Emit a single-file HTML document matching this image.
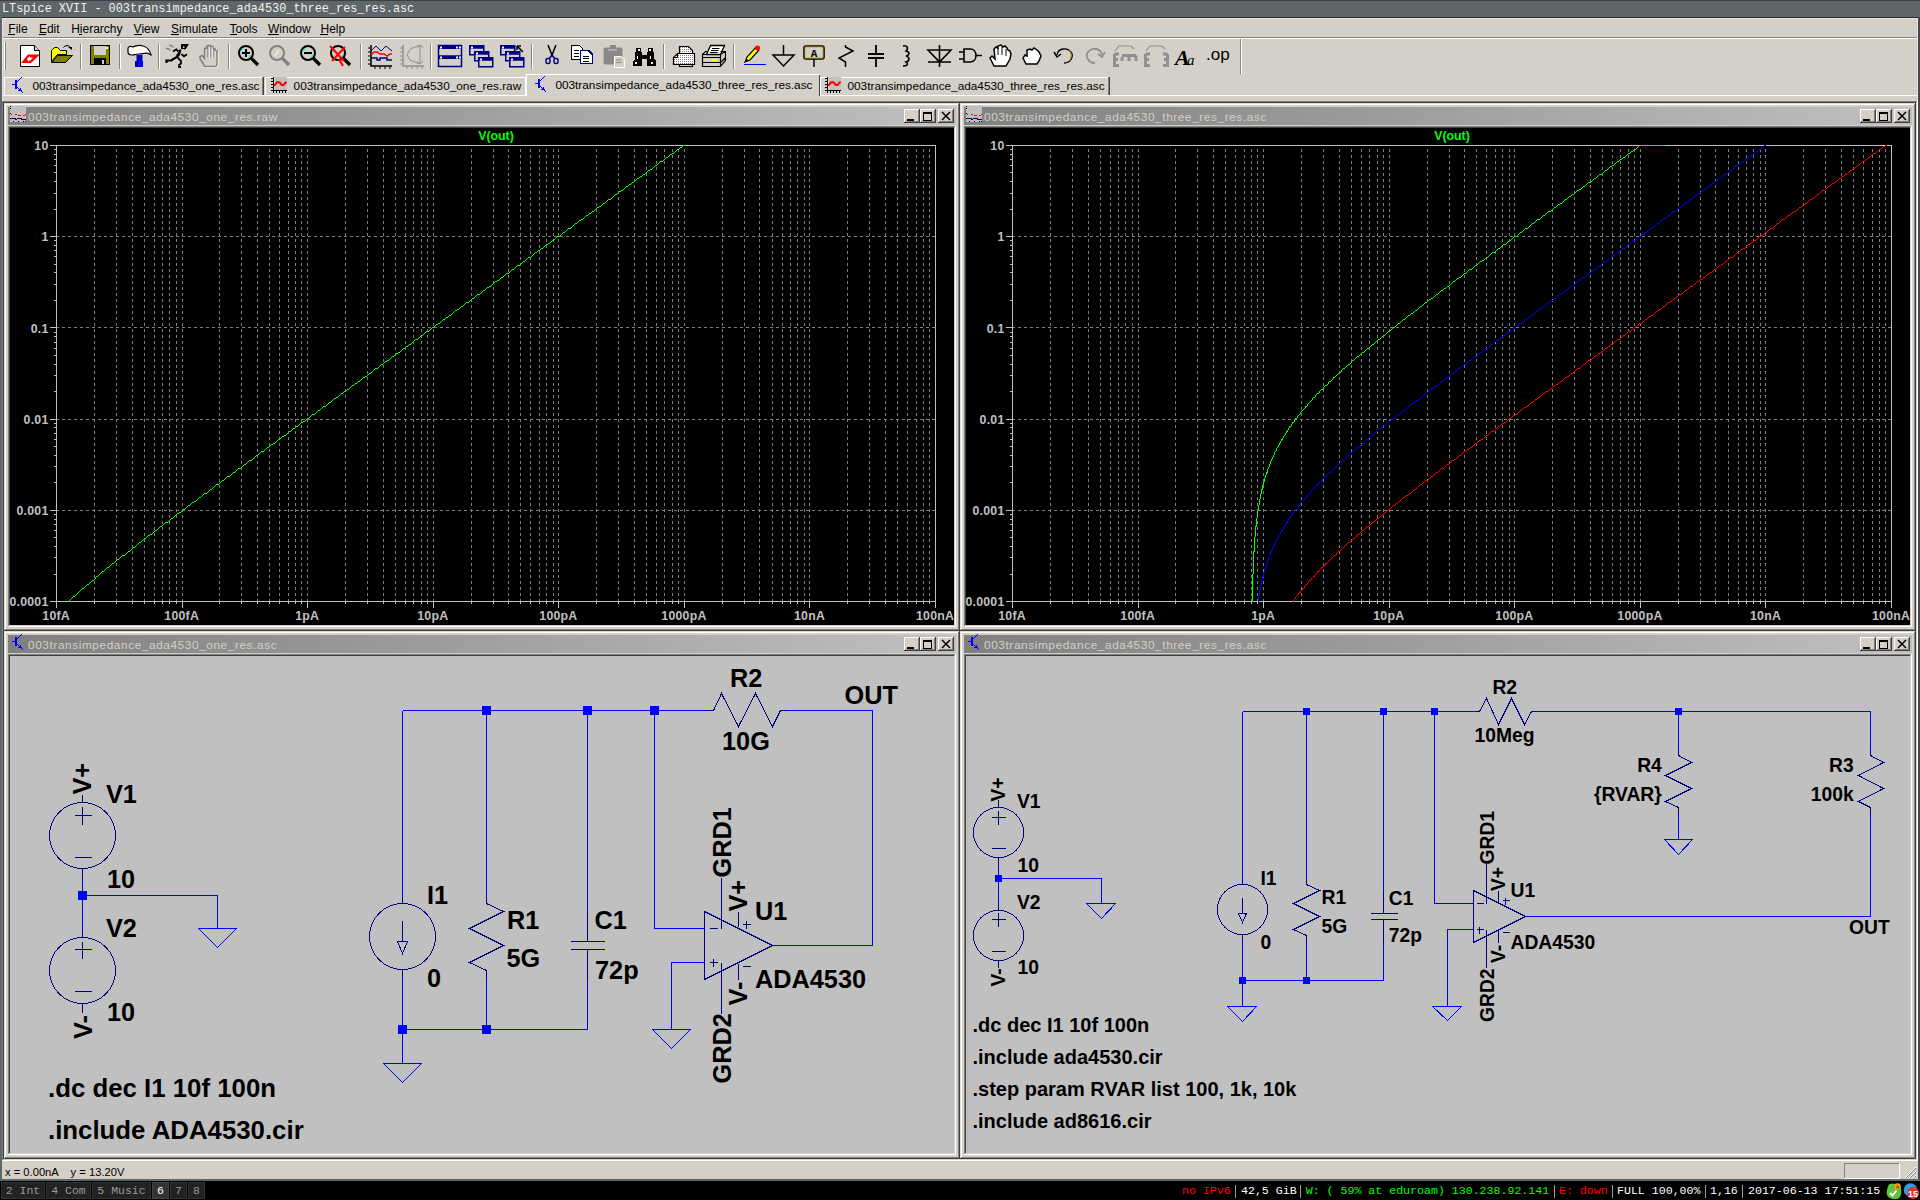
<!DOCTYPE html><html><head><meta charset="utf-8"><style>
html,body{margin:0;padding:0;width:1920px;height:1200px;overflow:hidden;background:#5f6669;}
body{position:relative;font-family:"Liberation Sans",sans-serif;}
div{box-sizing:border-box;}
svg{position:absolute;overflow:visible;}
</style></head><body>
<div style="position:absolute;left:0px;top:0px;width:1920px;height:1px;background:#3c4042;"></div>
<div style="position:absolute;left:2px;top:1.84px;font-family:'Liberation Mono';font-size:11.85px;font-weight:normal;line-height:15px;color:#f2f2f2;white-space:pre;">LTspice XVII - 003transimpedance_ada4530_three_res_res.asc</div>
<div style="position:absolute;left:2px;top:17px;width:1916px;height:1px;background:#2b2b2b;"></div>
<div style="position:absolute;left:1918px;top:17px;width:2px;height:1163px;background:#45494c;"></div>
<div style="position:absolute;left:2px;top:18px;width:1916px;height:1161px;background:#d4d0c8;"></div>
<div style="position:absolute;left:2px;top:18px;width:1px;height:83px;background:#e8e4de;"></div>
<div style="position:absolute;left:2px;top:18px;width:1915px;height:1px;background:#e8e4de;"></div>
<div style="position:absolute;left:1917px;top:18px;width:1px;height:83px;background:#e8e4de;"></div>
<div style="position:absolute;left:8.3px;top:20.54px;font-family:'Liberation Sans';font-size:12px;font-weight:normal;line-height:16px;color:#000;white-space:pre;">File</div>
<div style="position:absolute;left:38.9px;top:20.54px;font-family:'Liberation Sans';font-size:12px;font-weight:normal;line-height:16px;color:#000;white-space:pre;">Edit</div>
<div style="position:absolute;left:71.2px;top:20.54px;font-family:'Liberation Sans';font-size:12px;font-weight:normal;line-height:16px;color:#000;white-space:pre;">Hierarchy</div>
<div style="position:absolute;left:133.6px;top:20.54px;font-family:'Liberation Sans';font-size:12px;font-weight:normal;line-height:16px;color:#000;white-space:pre;">View</div>
<div style="position:absolute;left:171px;top:20.54px;font-family:'Liberation Sans';font-size:12px;font-weight:normal;line-height:16px;color:#000;white-space:pre;">Simulate</div>
<div style="position:absolute;left:229.5px;top:20.54px;font-family:'Liberation Sans';font-size:12px;font-weight:normal;line-height:16px;color:#000;white-space:pre;">Tools</div>
<div style="position:absolute;left:268px;top:20.54px;font-family:'Liberation Sans';font-size:12px;font-weight:normal;line-height:16px;color:#000;white-space:pre;">Window</div>
<div style="position:absolute;left:320.5px;top:20.54px;font-family:'Liberation Sans';font-size:12px;font-weight:normal;line-height:16px;color:#000;white-space:pre;">Help</div>
<div style="position:absolute;left:8px;top:34px;width:7px;height:1px;background:#000;"></div>
<div style="position:absolute;left:39px;top:34px;width:7px;height:1px;background:#000;"></div>
<div style="position:absolute;left:79px;top:34px;width:3px;height:1px;background:#000;"></div>
<div style="position:absolute;left:134px;top:34px;width:8px;height:1px;background:#000;"></div>
<div style="position:absolute;left:171px;top:34px;width:8px;height:1px;background:#000;"></div>
<div style="position:absolute;left:230px;top:34px;width:7px;height:1px;background:#000;"></div>
<div style="position:absolute;left:268px;top:34px;width:11px;height:1px;background:#000;"></div>
<div style="position:absolute;left:320px;top:34px;width:8px;height:1px;background:#000;"></div>
<div style="position:absolute;left:3px;top:37px;width:1914px;height:1px;background:#858585;"></div>
<div style="position:absolute;left:3px;top:38px;width:1914px;height:1px;background:#ffffff;"></div>
<div style="position:absolute;left:4px;top:42px;width:1px;height:28px;background:#ffffff;"></div>
<div style="position:absolute;left:5px;top:42px;width:1px;height:28px;background:#858585;"></div>
<div style="position:absolute;left:80px;top:44px;width:1px;height:25px;background:#858585;"></div>
<div style="position:absolute;left:81px;top:44px;width:1px;height:25px;background:#ffffff;"></div>
<div style="position:absolute;left:119px;top:44px;width:1px;height:25px;background:#858585;"></div>
<div style="position:absolute;left:120px;top:44px;width:1px;height:25px;background:#ffffff;"></div>
<div style="position:absolute;left:158px;top:44px;width:1px;height:25px;background:#858585;"></div>
<div style="position:absolute;left:159px;top:44px;width:1px;height:25px;background:#ffffff;"></div>
<div style="position:absolute;left:228px;top:44px;width:1px;height:25px;background:#858585;"></div>
<div style="position:absolute;left:229px;top:44px;width:1px;height:25px;background:#ffffff;"></div>
<div style="position:absolute;left:360px;top:44px;width:1px;height:25px;background:#858585;"></div>
<div style="position:absolute;left:361px;top:44px;width:1px;height:25px;background:#ffffff;"></div>
<div style="position:absolute;left:430px;top:44px;width:1px;height:25px;background:#858585;"></div>
<div style="position:absolute;left:431px;top:44px;width:1px;height:25px;background:#ffffff;"></div>
<div style="position:absolute;left:531px;top:44px;width:1px;height:25px;background:#858585;"></div>
<div style="position:absolute;left:532px;top:44px;width:1px;height:25px;background:#ffffff;"></div>
<div style="position:absolute;left:663px;top:44px;width:1px;height:25px;background:#858585;"></div>
<div style="position:absolute;left:664px;top:44px;width:1px;height:25px;background:#ffffff;"></div>
<div style="position:absolute;left:733px;top:44px;width:1px;height:25px;background:#858585;"></div>
<div style="position:absolute;left:734px;top:44px;width:1px;height:25px;background:#ffffff;"></div>
<div style="position:absolute;left:1240px;top:39px;width:1px;height:35px;background:#858585;"></div>
<div style="position:absolute;left:1241px;top:39px;width:1px;height:35px;background:#ffffff;"></div>
<div style="position:absolute;left:3px;top:95px;width:1914px;height:1px;background:#ffffff;"></div>
<div style="position:absolute;left:4px;top:77px;width:1px;height:18px;background:#ffffff;"></div>
<div style="position:absolute;left:4px;top:77px;width:260px;height:1px;background:#ffffff;"></div>
<div style="position:absolute;left:262px;top:77px;width:1px;height:18px;background:#808080;"></div>
<div style="position:absolute;left:263px;top:77px;width:1px;height:18px;background:#404040;"></div>
<div style="position:absolute;left:32.5px;top:79.11px;font-family:'Liberation Sans';font-size:11.8px;font-weight:normal;line-height:15px;color:#000;white-space:pre;">003transimpedance_ada4530_one_res.asc</div>
<div style="position:absolute;left:265px;top:77px;width:1px;height:18px;background:#ffffff;"></div>
<div style="position:absolute;left:265px;top:77px;width:261px;height:1px;background:#ffffff;"></div>
<div style="position:absolute;left:525px;top:77px;width:1px;height:18px;background:#ffffff;"></div>
<div style="position:absolute;left:293.6px;top:79.11px;font-family:'Liberation Sans';font-size:11.8px;font-weight:normal;line-height:15px;color:#000;white-space:pre;">003transimpedance_ada4530_one_res.raw</div>
<div style="position:absolute;left:526px;top:74px;width:294px;height:22px;background:#d4d0c8;"></div>
<div style="position:absolute;left:526px;top:74px;width:1px;height:22px;background:#ffffff;"></div>
<div style="position:absolute;left:526px;top:74px;width:294px;height:1px;background:#ffffff;"></div>
<div style="position:absolute;left:819px;top:75px;width:1px;height:21px;background:#404040;"></div>
<div style="position:absolute;left:555.4px;top:78.01px;font-family:'Liberation Sans';font-size:11.8px;font-weight:normal;line-height:15px;color:#000;white-space:pre;">003transimpedance_ada4530_three_res_res.asc</div>
<div style="position:absolute;left:820px;top:77px;width:1px;height:18px;background:#ffffff;"></div>
<div style="position:absolute;left:820px;top:77px;width:290px;height:1px;background:#ffffff;"></div>
<div style="position:absolute;left:1108px;top:77px;width:1px;height:18px;background:#808080;"></div>
<div style="position:absolute;left:1109px;top:77px;width:1px;height:18px;background:#404040;"></div>
<div style="position:absolute;left:847.5px;top:79.11px;font-family:'Liberation Sans';font-size:11.8px;font-weight:normal;line-height:15px;color:#000;white-space:pre;">003transimpedance_ada4530_three_res_res.asc</div>
<div style="position:absolute;left:2px;top:101px;width:1916px;height:1px;background:#808080;"></div>
<div style="position:absolute;left:2px;top:101px;width:1px;height:1060px;background:#808080;"></div>
<div style="position:absolute;left:3px;top:102px;width:1914px;height:1px;background:#404040;"></div>
<div style="position:absolute;left:3px;top:102px;width:1px;height:1058px;background:#404040;"></div>
<div style="position:absolute;left:2px;top:1160px;width:1916px;height:1px;background:#ffffff;"></div>
<div style="position:absolute;left:1917px;top:101px;width:1px;height:1060px;background:#ffffff;"></div>
<div style="position:absolute;left:3px;top:1159px;width:1914px;height:1px;background:#d4d0c8;"></div>
<div style="position:absolute;left:1916px;top:102px;width:1px;height:1058px;background:#d4d0c8;"></div>
<div style="position:absolute;left:5px;top:1164.52px;font-family:'Liberation Sans';font-size:11.2px;font-weight:normal;line-height:15px;color:#000;white-space:pre;">x = 0.00nA    y = 13.20V</div>
<div style="position:absolute;left:1844px;top:1163px;width:56px;height:1px;background:#808080;"></div>
<div style="position:absolute;left:1844px;top:1163px;width:1px;height:16px;background:#808080;"></div>
<div style="position:absolute;left:1844px;top:1178px;width:56px;height:1px;background:#ffffff;"></div>
<div style="position:absolute;left:1899px;top:1163px;width:1px;height:16px;background:#ffffff;"></div>
<svg style="left:0;top:0" width="1920" height="1200"><line x1="1913" y1="1178" x2="1916" y2="1175" stroke="#ffffff" stroke-width="1"/><line x1="1914" y1="1178" x2="1916" y2="1176" stroke="#808080" stroke-width="1"/></svg>
<svg style="left:0;top:0" width="1920" height="1200"><line x1="1909" y1="1178" x2="1916" y2="1171" stroke="#ffffff" stroke-width="1"/><line x1="1910" y1="1178" x2="1916" y2="1172" stroke="#808080" stroke-width="1"/></svg>
<svg style="left:0;top:0" width="1920" height="1200"><line x1="1905" y1="1178" x2="1916" y2="1167" stroke="#ffffff" stroke-width="1"/><line x1="1906" y1="1178" x2="1916" y2="1168" stroke="#808080" stroke-width="1"/></svg>
<div style="position:absolute;left:0px;top:1179px;width:1920px;height:2px;background:#5f6669;"></div>
<div style="position:absolute;left:0px;top:1181px;width:1920px;height:19px;background:#000000;"></div>
<div style="position:absolute;left:1px;top:1182px;width:44px;height:17px;background:#222222;border:1px solid #333333"></div>
<div style="position:absolute;left:-277.0px;width:600px;text-align:center;top:1182.84px;font-family:'Liberation Mono';font-size:11.5px;font-weight:normal;line-height:15px;color:#999999;white-space:pre;">2 Int</div>
<div style="position:absolute;left:46px;top:1182px;width:45px;height:17px;background:#222222;border:1px solid #333333"></div>
<div style="position:absolute;left:-231.5px;width:600px;text-align:center;top:1182.84px;font-family:'Liberation Mono';font-size:11.5px;font-weight:normal;line-height:15px;color:#999999;white-space:pre;">4 Com</div>
<div style="position:absolute;left:92px;top:1182px;width:59px;height:17px;background:#222222;border:1px solid #333333"></div>
<div style="position:absolute;left:-178.5px;width:600px;text-align:center;top:1182.84px;font-family:'Liberation Mono';font-size:11.5px;font-weight:normal;line-height:15px;color:#999999;white-space:pre;">5 Music</div>
<div style="position:absolute;left:152px;top:1182px;width:17px;height:17px;background:#333333;border:1px solid #444444"></div>
<div style="position:absolute;left:-139.5px;width:600px;text-align:center;top:1182.84px;font-family:'Liberation Mono';font-size:11.5px;font-weight:normal;line-height:15px;color:#ffffff;white-space:pre;">6</div>
<div style="position:absolute;left:170px;top:1182px;width:17px;height:17px;background:#222222;border:1px solid #333333"></div>
<div style="position:absolute;left:-121.5px;width:600px;text-align:center;top:1182.84px;font-family:'Liberation Mono';font-size:11.5px;font-weight:normal;line-height:15px;color:#999999;white-space:pre;">7</div>
<div style="position:absolute;left:188px;top:1182px;width:17px;height:17px;background:#222222;border:1px solid #333333"></div>
<div style="position:absolute;left:-103.5px;width:600px;text-align:center;top:1182.84px;font-family:'Liberation Mono';font-size:11.5px;font-weight:normal;line-height:15px;color:#999999;white-space:pre;">8</div>
<div style="position:absolute;left:1182px;top:1183.01px;font-family:'Liberation Mono';font-size:11.6px;font-weight:normal;line-height:15px;color:#ff0000;white-space:pre;">no IPv6</div>
<div style="position:absolute;left:1241px;top:1183.01px;font-family:'Liberation Mono';font-size:11.6px;font-weight:normal;line-height:15px;color:#ffffff;white-space:pre;">42,5 GiB</div>
<div style="position:absolute;left:1305.7px;top:1183.01px;font-family:'Liberation Mono';font-size:11.6px;font-weight:normal;line-height:15px;color:#00ff00;white-space:pre;">W: ( 59% at eduroam) 130.238.92.141</div>
<div style="position:absolute;left:1559px;top:1183.01px;font-family:'Liberation Mono';font-size:11.6px;font-weight:normal;line-height:15px;color:#ff0000;white-space:pre;">E: down</div>
<div style="position:absolute;left:1617px;top:1183.01px;font-family:'Liberation Mono';font-size:11.6px;font-weight:normal;line-height:15px;color:#ffffff;white-space:pre;">FULL 100,00%</div>
<div style="position:absolute;left:1710px;top:1183.01px;font-family:'Liberation Mono';font-size:11.6px;font-weight:normal;line-height:15px;color:#ffffff;white-space:pre;">1,16</div>
<div style="position:absolute;left:1748px;top:1183.01px;font-family:'Liberation Mono';font-size:11.6px;font-weight:normal;line-height:15px;color:#ffffff;white-space:pre;">2017-06-13 17:51:15</div>
<div style="position:absolute;left:1235px;top:1185px;width:1px;height:13px;background:#999999;"></div>
<div style="position:absolute;left:1300px;top:1185px;width:1px;height:13px;background:#999999;"></div>
<div style="position:absolute;left:1554px;top:1185px;width:1px;height:13px;background:#999999;"></div>
<div style="position:absolute;left:1612px;top:1185px;width:1px;height:13px;background:#999999;"></div>
<div style="position:absolute;left:1705px;top:1185px;width:1px;height:13px;background:#999999;"></div>
<div style="position:absolute;left:1742px;top:1185px;width:1px;height:13px;background:#999999;"></div>
<svg style="left:1886px;top:1183px" width="34" height="17"><path d="M2 3C3 0 7 0 9 1C12 0 15 2 15 6C16 9 15 13 13 15C10 17 6 16 4 15C1 14 0 10 1 7Z" fill="#5cc43c"/><path d="M4 10L6.5 12.5L10.5 7.5" stroke="#fff" stroke-width="2" fill="none"/><circle cx="11.5" cy="3.5" r="3.3" fill="#f5a000"/><text x="11.5" y="6" font-family="Liberation Sans" font-size="6" fill="#333" text-anchor="middle">4</text><circle cx="24.5" cy="7" r="6.8" fill="#2aa0e0"/><circle cx="27" cy="10" r="6" fill="#e53030"/><text x="27" y="13.5" font-family="Liberation Sans" font-size="9" font-weight="bold" fill="#fff" text-anchor="middle">15</text></svg>
<div style="position:absolute;left:4px;top:103px;width:956px;height:528px;background:#d4d0c8;"></div>
<div style="position:absolute;left:4px;top:103px;width:955px;height:1px;background:#e0dcd4;"></div>
<div style="position:absolute;left:4px;top:103px;width:1px;height:527px;background:#e0dcd4;"></div>
<div style="position:absolute;left:5px;top:104px;width:953px;height:1px;background:#ffffff;"></div>
<div style="position:absolute;left:5px;top:104px;width:1px;height:525px;background:#ffffff;"></div>
<div style="position:absolute;left:958px;top:104px;width:1px;height:526px;background:#808080;"></div>
<div style="position:absolute;left:5px;top:629px;width:954px;height:1px;background:#808080;"></div>
<div style="position:absolute;left:959px;top:103px;width:1px;height:528px;background:#404040;"></div>
<div style="position:absolute;left:4px;top:630px;width:956px;height:1px;background:#404040;"></div>
<div style="position:absolute;left:8px;top:107px;width:948px;height:18px;background:;background:linear-gradient(to right,#808080,#c0c0c0)"></div>
<svg style="left:10px;top:106px" width="16" height="16" shape-rendering="crispEdges"><rect x="0" y="0" width="16" height="16" fill="#c0c0c0"/><rect x="0" y="0" width="1" height="1" fill="#000"/><rect x="0" y="2" width="1" height="1" fill="#000"/><rect x="0" y="7" width="1" height="1" fill="#000"/><rect x="0" y="12" width="1" height="1" fill="#000"/><rect x="3" y="15" width="1" height="1" fill="#000"/><rect x="8" y="15" width="1" height="1" fill="#000"/><rect x="13" y="15" width="1" height="1" fill="#000"/><rect x="15" y="15" width="1" height="1" fill="#000"/><rect x="1" y="8" width="1" height="1" fill="#ff0000"/><rect x="5" y="8" width="2" height="1" fill="#ff0000"/><rect x="8" y="9" width="3" height="1" fill="#ff0000"/><rect x="13" y="9" width="2" height="1" fill="#ff0000"/><rect x="15" y="8" width="1" height="1" fill="#ff0000"/><rect x="1" y="12" width="5" height="1" fill="#000080"/><rect x="5" y="13" width="2" height="1" fill="#000080"/><rect x="7" y="12" width="5" height="1" fill="#000080"/><rect x="11" y="13" width="5" height="1" fill="#000080"/></svg>
<div style="position:absolute;left:28px;top:110.41px;font-family:'Liberation Sans';font-size:11.8px;font-weight:normal;line-height:15px;color:#d4d0c8;white-space:pre;letter-spacing:0.6px">003transimpedance_ada4530_one_res.raw</div>
<div style="position:absolute;left:938px;top:109px;width:16px;height:14px;background:#d4d0c8;"></div>
<div style="position:absolute;left:938px;top:109px;width:15px;height:1px;background:#ffffff;"></div>
<div style="position:absolute;left:938px;top:109px;width:1px;height:13px;background:#ffffff;"></div>
<div style="position:absolute;left:939px;top:121px;width:14px;height:1px;background:#808080;"></div>
<div style="position:absolute;left:952px;top:110px;width:1px;height:12px;background:#808080;"></div>
<div style="position:absolute;left:938px;top:122px;width:16px;height:1px;background:#404040;"></div>
<div style="position:absolute;left:953px;top:109px;width:1px;height:14px;background:#404040;"></div>
<svg style="left:938px;top:109px" width="16" height="14"><path d="M4 3 L12 11 M12 3 L4 11" stroke="#000" stroke-width="1.5"/></svg>
<div style="position:absolute;left:920px;top:109px;width:16px;height:14px;background:#d4d0c8;"></div>
<div style="position:absolute;left:920px;top:109px;width:15px;height:1px;background:#ffffff;"></div>
<div style="position:absolute;left:920px;top:109px;width:1px;height:13px;background:#ffffff;"></div>
<div style="position:absolute;left:921px;top:121px;width:14px;height:1px;background:#808080;"></div>
<div style="position:absolute;left:934px;top:110px;width:1px;height:12px;background:#808080;"></div>
<div style="position:absolute;left:920px;top:122px;width:16px;height:1px;background:#404040;"></div>
<div style="position:absolute;left:935px;top:109px;width:1px;height:14px;background:#404040;"></div>
<div style="position:absolute;left:923px;top:112px;width:9px;height:9px;background:transparent;border:1px solid #000;border-top-width:2px"></div>
<div style="position:absolute;left:904px;top:109px;width:16px;height:14px;background:#d4d0c8;"></div>
<div style="position:absolute;left:904px;top:109px;width:15px;height:1px;background:#ffffff;"></div>
<div style="position:absolute;left:904px;top:109px;width:1px;height:13px;background:#ffffff;"></div>
<div style="position:absolute;left:905px;top:121px;width:14px;height:1px;background:#808080;"></div>
<div style="position:absolute;left:918px;top:110px;width:1px;height:12px;background:#808080;"></div>
<div style="position:absolute;left:904px;top:122px;width:16px;height:1px;background:#404040;"></div>
<div style="position:absolute;left:919px;top:109px;width:1px;height:14px;background:#404040;"></div>
<div style="position:absolute;left:907px;top:119px;width:7px;height:2px;background:#000;"></div>
<div style="position:absolute;left:8px;top:126px;width:948px;height:1px;background:#808080;"></div>
<div style="position:absolute;left:8px;top:126px;width:1px;height:500px;background:#808080;"></div>
<div style="position:absolute;left:9px;top:127px;width:946px;height:1px;background:#404040;"></div>
<div style="position:absolute;left:9px;top:127px;width:1px;height:498px;background:#404040;"></div>
<div style="position:absolute;left:8px;top:626px;width:948px;height:1px;background:#ffffff;"></div>
<div style="position:absolute;left:955px;top:126px;width:1px;height:501px;background:#ffffff;"></div>
<div style="position:absolute;left:9px;top:625px;width:946px;height:1px;background:#d4d0c8;"></div>
<div style="position:absolute;left:954px;top:127px;width:1px;height:499px;background:#d4d0c8;"></div>
<div style="position:absolute;left:960px;top:103px;width:956px;height:528px;background:#d4d0c8;"></div>
<div style="position:absolute;left:960px;top:103px;width:955px;height:1px;background:#e0dcd4;"></div>
<div style="position:absolute;left:960px;top:103px;width:1px;height:527px;background:#e0dcd4;"></div>
<div style="position:absolute;left:961px;top:104px;width:953px;height:1px;background:#ffffff;"></div>
<div style="position:absolute;left:961px;top:104px;width:1px;height:525px;background:#ffffff;"></div>
<div style="position:absolute;left:1914px;top:104px;width:1px;height:526px;background:#808080;"></div>
<div style="position:absolute;left:961px;top:629px;width:954px;height:1px;background:#808080;"></div>
<div style="position:absolute;left:1915px;top:103px;width:1px;height:528px;background:#404040;"></div>
<div style="position:absolute;left:960px;top:630px;width:956px;height:1px;background:#404040;"></div>
<div style="position:absolute;left:964px;top:107px;width:948px;height:18px;background:;background:linear-gradient(to right,#808080,#c0c0c0)"></div>
<svg style="left:966px;top:106px" width="16" height="16" shape-rendering="crispEdges"><rect x="0" y="0" width="16" height="16" fill="#c0c0c0"/><rect x="0" y="0" width="1" height="1" fill="#000"/><rect x="0" y="2" width="1" height="1" fill="#000"/><rect x="0" y="7" width="1" height="1" fill="#000"/><rect x="0" y="12" width="1" height="1" fill="#000"/><rect x="3" y="15" width="1" height="1" fill="#000"/><rect x="8" y="15" width="1" height="1" fill="#000"/><rect x="13" y="15" width="1" height="1" fill="#000"/><rect x="15" y="15" width="1" height="1" fill="#000"/><rect x="1" y="8" width="1" height="1" fill="#ff0000"/><rect x="5" y="8" width="2" height="1" fill="#ff0000"/><rect x="8" y="9" width="3" height="1" fill="#ff0000"/><rect x="13" y="9" width="2" height="1" fill="#ff0000"/><rect x="15" y="8" width="1" height="1" fill="#ff0000"/><rect x="1" y="12" width="5" height="1" fill="#000080"/><rect x="5" y="13" width="2" height="1" fill="#000080"/><rect x="7" y="12" width="5" height="1" fill="#000080"/><rect x="11" y="13" width="5" height="1" fill="#000080"/></svg>
<div style="position:absolute;left:984px;top:110.41px;font-family:'Liberation Sans';font-size:11.8px;font-weight:normal;line-height:15px;color:#d4d0c8;white-space:pre;letter-spacing:0.6px">003transimpedance_ada4530_three_res_res.asc</div>
<div style="position:absolute;left:1894px;top:109px;width:16px;height:14px;background:#d4d0c8;"></div>
<div style="position:absolute;left:1894px;top:109px;width:15px;height:1px;background:#ffffff;"></div>
<div style="position:absolute;left:1894px;top:109px;width:1px;height:13px;background:#ffffff;"></div>
<div style="position:absolute;left:1895px;top:121px;width:14px;height:1px;background:#808080;"></div>
<div style="position:absolute;left:1908px;top:110px;width:1px;height:12px;background:#808080;"></div>
<div style="position:absolute;left:1894px;top:122px;width:16px;height:1px;background:#404040;"></div>
<div style="position:absolute;left:1909px;top:109px;width:1px;height:14px;background:#404040;"></div>
<svg style="left:1894px;top:109px" width="16" height="14"><path d="M4 3 L12 11 M12 3 L4 11" stroke="#000" stroke-width="1.5"/></svg>
<div style="position:absolute;left:1876px;top:109px;width:16px;height:14px;background:#d4d0c8;"></div>
<div style="position:absolute;left:1876px;top:109px;width:15px;height:1px;background:#ffffff;"></div>
<div style="position:absolute;left:1876px;top:109px;width:1px;height:13px;background:#ffffff;"></div>
<div style="position:absolute;left:1877px;top:121px;width:14px;height:1px;background:#808080;"></div>
<div style="position:absolute;left:1890px;top:110px;width:1px;height:12px;background:#808080;"></div>
<div style="position:absolute;left:1876px;top:122px;width:16px;height:1px;background:#404040;"></div>
<div style="position:absolute;left:1891px;top:109px;width:1px;height:14px;background:#404040;"></div>
<div style="position:absolute;left:1879px;top:112px;width:9px;height:9px;background:transparent;border:1px solid #000;border-top-width:2px"></div>
<div style="position:absolute;left:1860px;top:109px;width:16px;height:14px;background:#d4d0c8;"></div>
<div style="position:absolute;left:1860px;top:109px;width:15px;height:1px;background:#ffffff;"></div>
<div style="position:absolute;left:1860px;top:109px;width:1px;height:13px;background:#ffffff;"></div>
<div style="position:absolute;left:1861px;top:121px;width:14px;height:1px;background:#808080;"></div>
<div style="position:absolute;left:1874px;top:110px;width:1px;height:12px;background:#808080;"></div>
<div style="position:absolute;left:1860px;top:122px;width:16px;height:1px;background:#404040;"></div>
<div style="position:absolute;left:1875px;top:109px;width:1px;height:14px;background:#404040;"></div>
<div style="position:absolute;left:1863px;top:119px;width:7px;height:2px;background:#000;"></div>
<div style="position:absolute;left:964px;top:126px;width:948px;height:1px;background:#808080;"></div>
<div style="position:absolute;left:964px;top:126px;width:1px;height:500px;background:#808080;"></div>
<div style="position:absolute;left:965px;top:127px;width:946px;height:1px;background:#404040;"></div>
<div style="position:absolute;left:965px;top:127px;width:1px;height:498px;background:#404040;"></div>
<div style="position:absolute;left:964px;top:626px;width:948px;height:1px;background:#ffffff;"></div>
<div style="position:absolute;left:1911px;top:126px;width:1px;height:501px;background:#ffffff;"></div>
<div style="position:absolute;left:965px;top:625px;width:946px;height:1px;background:#d4d0c8;"></div>
<div style="position:absolute;left:1910px;top:127px;width:1px;height:499px;background:#d4d0c8;"></div>
<div style="position:absolute;left:4px;top:631px;width:956px;height:528px;background:#d4d0c8;"></div>
<div style="position:absolute;left:4px;top:631px;width:955px;height:1px;background:#e0dcd4;"></div>
<div style="position:absolute;left:4px;top:631px;width:1px;height:527px;background:#e0dcd4;"></div>
<div style="position:absolute;left:5px;top:632px;width:953px;height:1px;background:#ffffff;"></div>
<div style="position:absolute;left:5px;top:632px;width:1px;height:525px;background:#ffffff;"></div>
<div style="position:absolute;left:958px;top:632px;width:1px;height:526px;background:#808080;"></div>
<div style="position:absolute;left:5px;top:1157px;width:954px;height:1px;background:#808080;"></div>
<div style="position:absolute;left:959px;top:631px;width:1px;height:528px;background:#404040;"></div>
<div style="position:absolute;left:4px;top:1158px;width:956px;height:1px;background:#404040;"></div>
<div style="position:absolute;left:8px;top:635px;width:948px;height:18px;background:;background:linear-gradient(to right,#808080,#c0c0c0)"></div>
<svg style="left:8px;top:634px" width="16" height="16" shape-rendering="crispEdges"><rect x="4" y="7" width="3" height="1" fill="#0000ff"/><rect x="7" y="3" width="2" height="9" fill="#0000ff"/><rect x="9" y="4" width="1" height="1" fill="#0000ff"/><rect x="10" y="3" width="1" height="1" fill="#0000ff"/><rect x="11" y="2" width="1" height="1" fill="#0000ff"/><rect x="12" y="1" width="1" height="1" fill="#0000ff"/><rect x="13" y="0" width="1" height="1" fill="#0000ff"/><rect x="9" y="10" width="1" height="1" fill="#0000ff"/><rect x="10" y="11" width="1" height="1" fill="#0000ff"/><rect x="12" y="11" width="1" height="3" fill="#0000ff"/><rect x="11" y="12" width="2" height="2" fill="#0000ff"/><rect x="10" y="13" width="3" height="1" fill="#0000ff"/><rect x="13" y="13" width="1" height="2" fill="#0000ff"/><rect x="14" y="15" width="1" height="1" fill="#0000ff"/></svg>
<div style="position:absolute;left:28px;top:638.41px;font-family:'Liberation Sans';font-size:11.8px;font-weight:normal;line-height:15px;color:#d4d0c8;white-space:pre;letter-spacing:0.6px">003transimpedance_ada4530_one_res.asc</div>
<div style="position:absolute;left:938px;top:637px;width:16px;height:14px;background:#d4d0c8;"></div>
<div style="position:absolute;left:938px;top:637px;width:15px;height:1px;background:#ffffff;"></div>
<div style="position:absolute;left:938px;top:637px;width:1px;height:13px;background:#ffffff;"></div>
<div style="position:absolute;left:939px;top:649px;width:14px;height:1px;background:#808080;"></div>
<div style="position:absolute;left:952px;top:638px;width:1px;height:12px;background:#808080;"></div>
<div style="position:absolute;left:938px;top:650px;width:16px;height:1px;background:#404040;"></div>
<div style="position:absolute;left:953px;top:637px;width:1px;height:14px;background:#404040;"></div>
<svg style="left:938px;top:637px" width="16" height="14"><path d="M4 3 L12 11 M12 3 L4 11" stroke="#000" stroke-width="1.5"/></svg>
<div style="position:absolute;left:920px;top:637px;width:16px;height:14px;background:#d4d0c8;"></div>
<div style="position:absolute;left:920px;top:637px;width:15px;height:1px;background:#ffffff;"></div>
<div style="position:absolute;left:920px;top:637px;width:1px;height:13px;background:#ffffff;"></div>
<div style="position:absolute;left:921px;top:649px;width:14px;height:1px;background:#808080;"></div>
<div style="position:absolute;left:934px;top:638px;width:1px;height:12px;background:#808080;"></div>
<div style="position:absolute;left:920px;top:650px;width:16px;height:1px;background:#404040;"></div>
<div style="position:absolute;left:935px;top:637px;width:1px;height:14px;background:#404040;"></div>
<div style="position:absolute;left:923px;top:640px;width:9px;height:9px;background:transparent;border:1px solid #000;border-top-width:2px"></div>
<div style="position:absolute;left:904px;top:637px;width:16px;height:14px;background:#d4d0c8;"></div>
<div style="position:absolute;left:904px;top:637px;width:15px;height:1px;background:#ffffff;"></div>
<div style="position:absolute;left:904px;top:637px;width:1px;height:13px;background:#ffffff;"></div>
<div style="position:absolute;left:905px;top:649px;width:14px;height:1px;background:#808080;"></div>
<div style="position:absolute;left:918px;top:638px;width:1px;height:12px;background:#808080;"></div>
<div style="position:absolute;left:904px;top:650px;width:16px;height:1px;background:#404040;"></div>
<div style="position:absolute;left:919px;top:637px;width:1px;height:14px;background:#404040;"></div>
<div style="position:absolute;left:907px;top:647px;width:7px;height:2px;background:#000;"></div>
<div style="position:absolute;left:8px;top:654px;width:948px;height:1px;background:#808080;"></div>
<div style="position:absolute;left:8px;top:654px;width:1px;height:500px;background:#808080;"></div>
<div style="position:absolute;left:9px;top:655px;width:946px;height:1px;background:#404040;"></div>
<div style="position:absolute;left:9px;top:655px;width:1px;height:498px;background:#404040;"></div>
<div style="position:absolute;left:8px;top:1154px;width:948px;height:1px;background:#ffffff;"></div>
<div style="position:absolute;left:955px;top:654px;width:1px;height:501px;background:#ffffff;"></div>
<div style="position:absolute;left:9px;top:1153px;width:946px;height:1px;background:#d4d0c8;"></div>
<div style="position:absolute;left:954px;top:655px;width:1px;height:499px;background:#d4d0c8;"></div>
<div style="position:absolute;left:960px;top:631px;width:956px;height:528px;background:#d4d0c8;"></div>
<div style="position:absolute;left:960px;top:631px;width:955px;height:1px;background:#e0dcd4;"></div>
<div style="position:absolute;left:960px;top:631px;width:1px;height:527px;background:#e0dcd4;"></div>
<div style="position:absolute;left:961px;top:632px;width:953px;height:1px;background:#ffffff;"></div>
<div style="position:absolute;left:961px;top:632px;width:1px;height:525px;background:#ffffff;"></div>
<div style="position:absolute;left:1914px;top:632px;width:1px;height:526px;background:#808080;"></div>
<div style="position:absolute;left:961px;top:1157px;width:954px;height:1px;background:#808080;"></div>
<div style="position:absolute;left:1915px;top:631px;width:1px;height:528px;background:#404040;"></div>
<div style="position:absolute;left:960px;top:1158px;width:956px;height:1px;background:#404040;"></div>
<div style="position:absolute;left:964px;top:635px;width:948px;height:18px;background:;background:linear-gradient(to right,#808080,#c0c0c0)"></div>
<svg style="left:964px;top:634px" width="16" height="16" shape-rendering="crispEdges"><rect x="4" y="7" width="3" height="1" fill="#0000ff"/><rect x="7" y="3" width="2" height="9" fill="#0000ff"/><rect x="9" y="4" width="1" height="1" fill="#0000ff"/><rect x="10" y="3" width="1" height="1" fill="#0000ff"/><rect x="11" y="2" width="1" height="1" fill="#0000ff"/><rect x="12" y="1" width="1" height="1" fill="#0000ff"/><rect x="13" y="0" width="1" height="1" fill="#0000ff"/><rect x="9" y="10" width="1" height="1" fill="#0000ff"/><rect x="10" y="11" width="1" height="1" fill="#0000ff"/><rect x="12" y="11" width="1" height="3" fill="#0000ff"/><rect x="11" y="12" width="2" height="2" fill="#0000ff"/><rect x="10" y="13" width="3" height="1" fill="#0000ff"/><rect x="13" y="13" width="1" height="2" fill="#0000ff"/><rect x="14" y="15" width="1" height="1" fill="#0000ff"/></svg>
<div style="position:absolute;left:984px;top:638.41px;font-family:'Liberation Sans';font-size:11.8px;font-weight:normal;line-height:15px;color:#d4d0c8;white-space:pre;letter-spacing:0.6px">003transimpedance_ada4530_three_res_res.asc</div>
<div style="position:absolute;left:1894px;top:637px;width:16px;height:14px;background:#d4d0c8;"></div>
<div style="position:absolute;left:1894px;top:637px;width:15px;height:1px;background:#ffffff;"></div>
<div style="position:absolute;left:1894px;top:637px;width:1px;height:13px;background:#ffffff;"></div>
<div style="position:absolute;left:1895px;top:649px;width:14px;height:1px;background:#808080;"></div>
<div style="position:absolute;left:1908px;top:638px;width:1px;height:12px;background:#808080;"></div>
<div style="position:absolute;left:1894px;top:650px;width:16px;height:1px;background:#404040;"></div>
<div style="position:absolute;left:1909px;top:637px;width:1px;height:14px;background:#404040;"></div>
<svg style="left:1894px;top:637px" width="16" height="14"><path d="M4 3 L12 11 M12 3 L4 11" stroke="#000" stroke-width="1.5"/></svg>
<div style="position:absolute;left:1876px;top:637px;width:16px;height:14px;background:#d4d0c8;"></div>
<div style="position:absolute;left:1876px;top:637px;width:15px;height:1px;background:#ffffff;"></div>
<div style="position:absolute;left:1876px;top:637px;width:1px;height:13px;background:#ffffff;"></div>
<div style="position:absolute;left:1877px;top:649px;width:14px;height:1px;background:#808080;"></div>
<div style="position:absolute;left:1890px;top:638px;width:1px;height:12px;background:#808080;"></div>
<div style="position:absolute;left:1876px;top:650px;width:16px;height:1px;background:#404040;"></div>
<div style="position:absolute;left:1891px;top:637px;width:1px;height:14px;background:#404040;"></div>
<div style="position:absolute;left:1879px;top:640px;width:9px;height:9px;background:transparent;border:1px solid #000;border-top-width:2px"></div>
<div style="position:absolute;left:1860px;top:637px;width:16px;height:14px;background:#d4d0c8;"></div>
<div style="position:absolute;left:1860px;top:637px;width:15px;height:1px;background:#ffffff;"></div>
<div style="position:absolute;left:1860px;top:637px;width:1px;height:13px;background:#ffffff;"></div>
<div style="position:absolute;left:1861px;top:649px;width:14px;height:1px;background:#808080;"></div>
<div style="position:absolute;left:1874px;top:638px;width:1px;height:12px;background:#808080;"></div>
<div style="position:absolute;left:1860px;top:650px;width:16px;height:1px;background:#404040;"></div>
<div style="position:absolute;left:1875px;top:637px;width:1px;height:14px;background:#404040;"></div>
<div style="position:absolute;left:1863px;top:647px;width:7px;height:2px;background:#000;"></div>
<div style="position:absolute;left:964px;top:654px;width:948px;height:1px;background:#808080;"></div>
<div style="position:absolute;left:964px;top:654px;width:1px;height:500px;background:#808080;"></div>
<div style="position:absolute;left:965px;top:655px;width:946px;height:1px;background:#404040;"></div>
<div style="position:absolute;left:965px;top:655px;width:1px;height:498px;background:#404040;"></div>
<div style="position:absolute;left:964px;top:1154px;width:948px;height:1px;background:#ffffff;"></div>
<div style="position:absolute;left:1911px;top:654px;width:1px;height:501px;background:#ffffff;"></div>
<div style="position:absolute;left:965px;top:1153px;width:946px;height:1px;background:#d4d0c8;"></div>
<div style="position:absolute;left:1910px;top:655px;width:1px;height:499px;background:#d4d0c8;"></div>
<div style="position:absolute;left:10px;top:128px;width:944px;height:497px;background:#000000;"></div>
<svg style="left:0;top:0" width="1920" height="1200" shape-rendering="crispEdges"><line x1="94.5" y1="602" x2="94.5" y2="145" stroke="#808080" stroke-dasharray="3 3"/><rect x="94" y="602" width="1" height="2" fill="#c0c0c0"/><line x1="116.5" y1="602" x2="116.5" y2="145" stroke="#808080" stroke-dasharray="3 3"/><rect x="116" y="602" width="1" height="2" fill="#c0c0c0"/><line x1="132.5" y1="602" x2="132.5" y2="145" stroke="#808080" stroke-dasharray="3 3"/><rect x="132" y="602" width="1" height="2" fill="#c0c0c0"/><line x1="144.5" y1="602" x2="144.5" y2="145" stroke="#808080" stroke-dasharray="3 3"/><rect x="144" y="602" width="1" height="2" fill="#c0c0c0"/><line x1="154.5" y1="602" x2="154.5" y2="145" stroke="#808080" stroke-dasharray="3 3"/><rect x="154" y="602" width="1" height="2" fill="#c0c0c0"/><line x1="162.5" y1="602" x2="162.5" y2="145" stroke="#808080" stroke-dasharray="3 3"/><rect x="162" y="602" width="1" height="2" fill="#c0c0c0"/><line x1="169.5" y1="602" x2="169.5" y2="145" stroke="#808080" stroke-dasharray="3 3"/><rect x="169" y="602" width="1" height="2" fill="#c0c0c0"/><line x1="176.5" y1="602" x2="176.5" y2="145" stroke="#808080" stroke-dasharray="3 3"/><rect x="176" y="602" width="1" height="2" fill="#c0c0c0"/><line x1="182.5" y1="602" x2="182.5" y2="145" stroke="#808080" stroke-dasharray="3 3"/><rect x="182" y="602" width="1" height="6" fill="#c0c0c0"/><line x1="219.5" y1="602" x2="219.5" y2="145" stroke="#808080" stroke-dasharray="3 3"/><rect x="219" y="602" width="1" height="2" fill="#c0c0c0"/><line x1="241.5" y1="602" x2="241.5" y2="145" stroke="#808080" stroke-dasharray="3 3"/><rect x="241" y="602" width="1" height="2" fill="#c0c0c0"/><line x1="257.5" y1="602" x2="257.5" y2="145" stroke="#808080" stroke-dasharray="3 3"/><rect x="257" y="602" width="1" height="2" fill="#c0c0c0"/><line x1="269.5" y1="602" x2="269.5" y2="145" stroke="#808080" stroke-dasharray="3 3"/><rect x="269" y="602" width="1" height="2" fill="#c0c0c0"/><line x1="279.5" y1="602" x2="279.5" y2="145" stroke="#808080" stroke-dasharray="3 3"/><rect x="279" y="602" width="1" height="2" fill="#c0c0c0"/><line x1="288.5" y1="602" x2="288.5" y2="145" stroke="#808080" stroke-dasharray="3 3"/><rect x="288" y="602" width="1" height="2" fill="#c0c0c0"/><line x1="295.5" y1="602" x2="295.5" y2="145" stroke="#808080" stroke-dasharray="3 3"/><rect x="295" y="602" width="1" height="2" fill="#c0c0c0"/><line x1="301.5" y1="602" x2="301.5" y2="145" stroke="#808080" stroke-dasharray="3 3"/><rect x="301" y="602" width="1" height="2" fill="#c0c0c0"/><line x1="307.5" y1="602" x2="307.5" y2="145" stroke="#808080" stroke-dasharray="3 3"/><rect x="307" y="602" width="1" height="6" fill="#c0c0c0"/><line x1="345.5" y1="602" x2="345.5" y2="145" stroke="#808080" stroke-dasharray="3 3"/><rect x="345" y="602" width="1" height="2" fill="#c0c0c0"/><line x1="367.5" y1="602" x2="367.5" y2="145" stroke="#808080" stroke-dasharray="3 3"/><rect x="367" y="602" width="1" height="2" fill="#c0c0c0"/><line x1="383.5" y1="602" x2="383.5" y2="145" stroke="#808080" stroke-dasharray="3 3"/><rect x="383" y="602" width="1" height="2" fill="#c0c0c0"/><line x1="395.5" y1="602" x2="395.5" y2="145" stroke="#808080" stroke-dasharray="3 3"/><rect x="395" y="602" width="1" height="2" fill="#c0c0c0"/><line x1="405.5" y1="602" x2="405.5" y2="145" stroke="#808080" stroke-dasharray="3 3"/><rect x="405" y="602" width="1" height="2" fill="#c0c0c0"/><line x1="413.5" y1="602" x2="413.5" y2="145" stroke="#808080" stroke-dasharray="3 3"/><rect x="413" y="602" width="1" height="2" fill="#c0c0c0"/><line x1="421.5" y1="602" x2="421.5" y2="145" stroke="#808080" stroke-dasharray="3 3"/><rect x="421" y="602" width="1" height="2" fill="#c0c0c0"/><line x1="427.5" y1="602" x2="427.5" y2="145" stroke="#808080" stroke-dasharray="3 3"/><rect x="427" y="602" width="1" height="2" fill="#c0c0c0"/><line x1="433.5" y1="602" x2="433.5" y2="145" stroke="#808080" stroke-dasharray="3 3"/><rect x="433" y="602" width="1" height="6" fill="#c0c0c0"/><line x1="471.5" y1="602" x2="471.5" y2="145" stroke="#808080" stroke-dasharray="3 3"/><rect x="471" y="602" width="1" height="2" fill="#c0c0c0"/><line x1="493.5" y1="602" x2="493.5" y2="145" stroke="#808080" stroke-dasharray="3 3"/><rect x="493" y="602" width="1" height="2" fill="#c0c0c0"/><line x1="508.5" y1="602" x2="508.5" y2="145" stroke="#808080" stroke-dasharray="3 3"/><rect x="508" y="602" width="1" height="2" fill="#c0c0c0"/><line x1="520.5" y1="602" x2="520.5" y2="145" stroke="#808080" stroke-dasharray="3 3"/><rect x="520" y="602" width="1" height="2" fill="#c0c0c0"/><line x1="530.5" y1="602" x2="530.5" y2="145" stroke="#808080" stroke-dasharray="3 3"/><rect x="530" y="602" width="1" height="2" fill="#c0c0c0"/><line x1="539.5" y1="602" x2="539.5" y2="145" stroke="#808080" stroke-dasharray="3 3"/><rect x="539" y="602" width="1" height="2" fill="#c0c0c0"/><line x1="546.5" y1="602" x2="546.5" y2="145" stroke="#808080" stroke-dasharray="3 3"/><rect x="546" y="602" width="1" height="2" fill="#c0c0c0"/><line x1="553.5" y1="602" x2="553.5" y2="145" stroke="#808080" stroke-dasharray="3 3"/><rect x="553" y="602" width="1" height="2" fill="#c0c0c0"/><line x1="558.5" y1="602" x2="558.5" y2="145" stroke="#808080" stroke-dasharray="3 3"/><rect x="558" y="602" width="1" height="6" fill="#c0c0c0"/><line x1="596.5" y1="602" x2="596.5" y2="145" stroke="#808080" stroke-dasharray="3 3"/><rect x="596" y="602" width="1" height="2" fill="#c0c0c0"/><line x1="618.5" y1="602" x2="618.5" y2="145" stroke="#808080" stroke-dasharray="3 3"/><rect x="618" y="602" width="1" height="2" fill="#c0c0c0"/><line x1="634.5" y1="602" x2="634.5" y2="145" stroke="#808080" stroke-dasharray="3 3"/><rect x="634" y="602" width="1" height="2" fill="#c0c0c0"/><line x1="646.5" y1="602" x2="646.5" y2="145" stroke="#808080" stroke-dasharray="3 3"/><rect x="646" y="602" width="1" height="2" fill="#c0c0c0"/><line x1="656.5" y1="602" x2="656.5" y2="145" stroke="#808080" stroke-dasharray="3 3"/><rect x="656" y="602" width="1" height="2" fill="#c0c0c0"/><line x1="664.5" y1="602" x2="664.5" y2="145" stroke="#808080" stroke-dasharray="3 3"/><rect x="664" y="602" width="1" height="2" fill="#c0c0c0"/><line x1="672.5" y1="602" x2="672.5" y2="145" stroke="#808080" stroke-dasharray="3 3"/><rect x="672" y="602" width="1" height="2" fill="#c0c0c0"/><line x1="678.5" y1="602" x2="678.5" y2="145" stroke="#808080" stroke-dasharray="3 3"/><rect x="678" y="602" width="1" height="2" fill="#c0c0c0"/><line x1="684.5" y1="602" x2="684.5" y2="145" stroke="#808080" stroke-dasharray="3 3"/><rect x="684" y="602" width="1" height="6" fill="#c0c0c0"/><line x1="722.5" y1="602" x2="722.5" y2="145" stroke="#808080" stroke-dasharray="3 3"/><rect x="722" y="602" width="1" height="2" fill="#c0c0c0"/><line x1="744.5" y1="602" x2="744.5" y2="145" stroke="#808080" stroke-dasharray="3 3"/><rect x="744" y="602" width="1" height="2" fill="#c0c0c0"/><line x1="759.5" y1="602" x2="759.5" y2="145" stroke="#808080" stroke-dasharray="3 3"/><rect x="759" y="602" width="1" height="2" fill="#c0c0c0"/><line x1="772.5" y1="602" x2="772.5" y2="145" stroke="#808080" stroke-dasharray="3 3"/><rect x="772" y="602" width="1" height="2" fill="#c0c0c0"/><line x1="782.5" y1="602" x2="782.5" y2="145" stroke="#808080" stroke-dasharray="3 3"/><rect x="782" y="602" width="1" height="2" fill="#c0c0c0"/><line x1="790.5" y1="602" x2="790.5" y2="145" stroke="#808080" stroke-dasharray="3 3"/><rect x="790" y="602" width="1" height="2" fill="#c0c0c0"/><line x1="797.5" y1="602" x2="797.5" y2="145" stroke="#808080" stroke-dasharray="3 3"/><rect x="797" y="602" width="1" height="2" fill="#c0c0c0"/><line x1="804.5" y1="602" x2="804.5" y2="145" stroke="#808080" stroke-dasharray="3 3"/><rect x="804" y="602" width="1" height="2" fill="#c0c0c0"/><line x1="809.5" y1="602" x2="809.5" y2="145" stroke="#808080" stroke-dasharray="3 3"/><rect x="809" y="602" width="1" height="6" fill="#c0c0c0"/><line x1="847.5" y1="602" x2="847.5" y2="145" stroke="#808080" stroke-dasharray="3 3"/><rect x="847" y="602" width="1" height="2" fill="#c0c0c0"/><line x1="869.5" y1="602" x2="869.5" y2="145" stroke="#808080" stroke-dasharray="3 3"/><rect x="869" y="602" width="1" height="2" fill="#c0c0c0"/><line x1="885.5" y1="602" x2="885.5" y2="145" stroke="#808080" stroke-dasharray="3 3"/><rect x="885" y="602" width="1" height="2" fill="#c0c0c0"/><line x1="897.5" y1="602" x2="897.5" y2="145" stroke="#808080" stroke-dasharray="3 3"/><rect x="897" y="602" width="1" height="2" fill="#c0c0c0"/><line x1="907.5" y1="602" x2="907.5" y2="145" stroke="#808080" stroke-dasharray="3 3"/><rect x="907" y="602" width="1" height="2" fill="#c0c0c0"/><line x1="916.5" y1="602" x2="916.5" y2="145" stroke="#808080" stroke-dasharray="3 3"/><rect x="916" y="602" width="1" height="2" fill="#c0c0c0"/><line x1="923.5" y1="602" x2="923.5" y2="145" stroke="#808080" stroke-dasharray="3 3"/><rect x="923" y="602" width="1" height="2" fill="#c0c0c0"/><line x1="929.5" y1="602" x2="929.5" y2="145" stroke="#808080" stroke-dasharray="3 3"/><rect x="929" y="602" width="1" height="2" fill="#c0c0c0"/><rect x="935" y="602" width="1" height="6" fill="#c0c0c0"/><rect x="56" y="602" width="1" height="6" fill="#c0c0c0"/><rect x="50" y="601" width="6" height="1" fill="#c0c0c0"/><rect x="54" y="574" width="2" height="1" fill="#c0c0c0"/><rect x="54" y="557" width="2" height="1" fill="#c0c0c0"/><rect x="54" y="546" width="2" height="1" fill="#c0c0c0"/><rect x="54" y="537" width="2" height="1" fill="#c0c0c0"/><rect x="54" y="530" width="2" height="1" fill="#c0c0c0"/><rect x="54" y="524" width="2" height="1" fill="#c0c0c0"/><rect x="54" y="519" width="2" height="1" fill="#c0c0c0"/><rect x="54" y="514" width="2" height="1" fill="#c0c0c0"/><line x1="56" y1="510.5" x2="935" y2="510.5" stroke="#808080" stroke-dasharray="3 3"/><rect x="50" y="510" width="6" height="1" fill="#c0c0c0"/><rect x="54" y="482" width="2" height="1" fill="#c0c0c0"/><rect x="54" y="466" width="2" height="1" fill="#c0c0c0"/><rect x="54" y="455" width="2" height="1" fill="#c0c0c0"/><rect x="54" y="446" width="2" height="1" fill="#c0c0c0"/><rect x="54" y="439" width="2" height="1" fill="#c0c0c0"/><rect x="54" y="433" width="2" height="1" fill="#c0c0c0"/><rect x="54" y="427" width="2" height="1" fill="#c0c0c0"/><rect x="54" y="423" width="2" height="1" fill="#c0c0c0"/><line x1="56" y1="419.5" x2="935" y2="419.5" stroke="#808080" stroke-dasharray="3 3"/><rect x="50" y="419" width="6" height="1" fill="#c0c0c0"/><rect x="54" y="391" width="2" height="1" fill="#c0c0c0"/><rect x="54" y="375" width="2" height="1" fill="#c0c0c0"/><rect x="54" y="364" width="2" height="1" fill="#c0c0c0"/><rect x="54" y="355" width="2" height="1" fill="#c0c0c0"/><rect x="54" y="348" width="2" height="1" fill="#c0c0c0"/><rect x="54" y="342" width="2" height="1" fill="#c0c0c0"/><rect x="54" y="336" width="2" height="1" fill="#c0c0c0"/><rect x="54" y="332" width="2" height="1" fill="#c0c0c0"/><line x1="56" y1="327.5" x2="935" y2="327.5" stroke="#808080" stroke-dasharray="3 3"/><rect x="50" y="327" width="6" height="1" fill="#c0c0c0"/><rect x="54" y="300" width="2" height="1" fill="#c0c0c0"/><rect x="54" y="284" width="2" height="1" fill="#c0c0c0"/><rect x="54" y="272" width="2" height="1" fill="#c0c0c0"/><rect x="54" y="264" width="2" height="1" fill="#c0c0c0"/><rect x="54" y="256" width="2" height="1" fill="#c0c0c0"/><rect x="54" y="250" width="2" height="1" fill="#c0c0c0"/><rect x="54" y="245" width="2" height="1" fill="#c0c0c0"/><rect x="54" y="240" width="2" height="1" fill="#c0c0c0"/><line x1="56" y1="236.5" x2="935" y2="236.5" stroke="#808080" stroke-dasharray="3 3"/><rect x="50" y="236" width="6" height="1" fill="#c0c0c0"/><rect x="54" y="209" width="2" height="1" fill="#c0c0c0"/><rect x="54" y="193" width="2" height="1" fill="#c0c0c0"/><rect x="54" y="181" width="2" height="1" fill="#c0c0c0"/><rect x="54" y="172" width="2" height="1" fill="#c0c0c0"/><rect x="54" y="165" width="2" height="1" fill="#c0c0c0"/><rect x="54" y="159" width="2" height="1" fill="#c0c0c0"/><rect x="54" y="154" width="2" height="1" fill="#c0c0c0"/><rect x="54" y="149" width="2" height="1" fill="#c0c0c0"/><rect x="50" y="145" width="6" height="1" fill="#c0c0c0"/><rect x="56.5" y="145.5" width="879" height="456" fill="none" stroke="#c0c0c0"/><path d="M683 145.5h2M682 146.5h1M680 147.5h2M679 148.5h1M677 149.5h2M676 150.5h1M675 151.5h1M674 152.5h1M672 153.5h2M670 154.5h2M669 155.5h1M668 156.5h1M666 157.5h2M665 158.5h1M664 159.5h1M663 160.5h1M660 161.5h3M659 162.5h1M658 163.5h1M657 164.5h1M655 165.5h2M654 166.5h1M653 167.5h1M652 168.5h1M650 169.5h2M648 170.5h2M647 171.5h1M646 172.5h1M645 173.5h1M643 174.5h2M642 175.5h1M640 176.5h2M639 177.5h1M637 178.5h2M636 179.5h1M635 180.5h1M634 181.5h1M632 182.5h2M631 183.5h1M629 184.5h2M628 185.5h1M626 186.5h2M625 187.5h1M624 188.5h1M623 189.5h1M621 190.5h2M619 191.5h2M618 192.5h1M617 193.5h1M615 194.5h2M614 195.5h1M613 196.5h1M612 197.5h1M611 198.5h1M608 199.5h3M607 200.5h1M606 201.5h1M605 202.5h1M603 203.5h2M602 204.5h1M601 205.5h1M599 206.5h2M597 207.5h2M596 208.5h1M595 209.5h1M594 210.5h1M592 211.5h2M591 212.5h1M589 213.5h2M588 214.5h1M586 215.5h2M585 216.5h1M584 217.5h1M583 218.5h1M581 219.5h2M579 220.5h2M578 221.5h1M577 222.5h1M575 223.5h2M574 224.5h1M573 225.5h1M572 226.5h1M571 227.5h1M568 228.5h3M567 229.5h1M566 230.5h1M565 231.5h1M563 232.5h2M562 233.5h1M561 234.5h1M560 235.5h1M557 236.5h3M556 237.5h1M555 238.5h1M554 239.5h1M552 240.5h2M551 241.5h1M550 242.5h1M548 243.5h2M546 244.5h2M545 245.5h1M544 246.5h1M543 247.5h1M541 248.5h2M540 249.5h1M538 250.5h2M537 251.5h1M535 252.5h2M534 253.5h1M533 254.5h1M532 255.5h1M531 256.5h1M528 257.5h3M527 258.5h1M526 259.5h1M525 260.5h1M523 261.5h2M522 262.5h1M521 263.5h1M520 264.5h1M517 265.5h3M516 266.5h1M515 267.5h1M514 268.5h1M512 269.5h2M511 270.5h1M510 271.5h1M509 272.5h1M506 273.5h3M505 274.5h1M504 275.5h1M503 276.5h1M501 277.5h2M500 278.5h1M499 279.5h1M497 280.5h2M495 281.5h2M494 282.5h1M493 283.5h1M492 284.5h1M491 285.5h1M489 286.5h2M487 287.5h2M486 288.5h1M485 289.5h1M483 290.5h2M482 291.5h1M481 292.5h1M480 293.5h1M477 294.5h3M476 295.5h1M475 296.5h1M474 297.5h1M472 298.5h2M471 299.5h1M470 300.5h1M469 301.5h1M466 302.5h3M465 303.5h1M464 304.5h1M463 305.5h1M461 306.5h2M460 307.5h1M459 308.5h1M457 309.5h2M455 310.5h2M454 311.5h1M453 312.5h1M452 313.5h1M451 314.5h1M449 315.5h2M448 316.5h1M446 317.5h2M445 318.5h1M443 319.5h2M442 320.5h1M441 321.5h1M440 322.5h1M438 323.5h2M436 324.5h2M435 325.5h1M434 326.5h1M432 327.5h2M431 328.5h1M430 329.5h1M429 330.5h1M426 331.5h3M425 332.5h1M424 333.5h1M423 334.5h1M421 335.5h2M420 336.5h1M419 337.5h1M418 338.5h1M415 339.5h3M414 340.5h1M413 341.5h1M412 342.5h1M411 343.5h1M409 344.5h2M408 345.5h1M406 346.5h2M405 347.5h1M403 348.5h2M402 349.5h1M401 350.5h1M400 351.5h1M398 352.5h2M396 353.5h2M395 354.5h1M394 355.5h1M392 356.5h2M391 357.5h1M390 358.5h1M389 359.5h1M387 360.5h2M385 361.5h2M384 362.5h1M383 363.5h1M381 364.5h2M380 365.5h1M379 366.5h1M378 367.5h1M375 368.5h3M374 369.5h1M373 370.5h1M372 371.5h1M371 372.5h1M369 373.5h2M368 374.5h1M367 375.5h1M365 376.5h2M363 377.5h2M362 378.5h1M361 379.5h1M360 380.5h1M358 381.5h2M357 382.5h1M355 383.5h2M354 384.5h1M352 385.5h2M351 386.5h1M350 387.5h1M349 388.5h1M347 389.5h2M346 390.5h1M344 391.5h2M343 392.5h1M341 393.5h2M340 394.5h1M339 395.5h1M338 396.5h1M336 397.5h2M334 398.5h2M333 399.5h1M332 400.5h1M331 401.5h1M329 402.5h2M328 403.5h1M327 404.5h1M326 405.5h1M323 406.5h3M322 407.5h1M321 408.5h1M320 409.5h1M318 410.5h2M317 411.5h1M316 412.5h1M315 413.5h1M312 414.5h3M311 415.5h1M310 416.5h1M309 417.5h1M307 418.5h2M306 419.5h1M305 420.5h1M303 421.5h2M301 422.5h2M300 423.5h1M299 424.5h1M298 425.5h1M296 426.5h2M295 427.5h1M293 428.5h2M292 429.5h1M291 430.5h1M289 431.5h2M288 432.5h1M287 433.5h1M286 434.5h1M284 435.5h2M282 436.5h2M281 437.5h1M280 438.5h1M278 439.5h2M277 440.5h1M276 441.5h1M275 442.5h1M273 443.5h2M271 444.5h2M270 445.5h1M269 446.5h1M267 447.5h2M266 448.5h1M265 449.5h1M264 450.5h1M261 451.5h3M260 452.5h1M259 453.5h1M258 454.5h1M256 455.5h2M255 456.5h1M254 457.5h1M253 458.5h1M252 459.5h1M249 460.5h3M248 461.5h1M247 462.5h1M246 463.5h1M244 464.5h2M243 465.5h1M242 466.5h1M241 467.5h1M238 468.5h3M237 469.5h1M236 470.5h1M235 471.5h1M233 472.5h2M232 473.5h1M231 474.5h1M230 475.5h1M227 476.5h3M226 477.5h1M225 478.5h1M224 479.5h1M222 480.5h2M221 481.5h1M220 482.5h1M219 483.5h1M216 484.5h3M215 485.5h1M214 486.5h1M213 487.5h1M212 488.5h1M210 489.5h2M209 490.5h1M208 491.5h1M207 492.5h1M204 493.5h3M203 494.5h1M202 495.5h1M201 496.5h1M199 497.5h2M198 498.5h1M197 499.5h1M196 500.5h1M194 501.5h2M192 502.5h2M191 503.5h1M190 504.5h1M188 505.5h2M187 506.5h1M186 507.5h1M185 508.5h1M183 509.5h2M182 510.5h1M181 511.5h1M179 512.5h2M177 513.5h2M176 514.5h1M175 515.5h1M174 516.5h1M173 517.5h1M171 518.5h2M170 519.5h1M169 520.5h1M168 521.5h1M165 522.5h3M164 523.5h1M163 524.5h1M162 525.5h1M160 526.5h2M159 527.5h1M158 528.5h1M157 529.5h1M155 530.5h2M154 531.5h1M153 532.5h1M152 533.5h1M150 534.5h2M148 535.5h2M147 536.5h1M146 537.5h1M144 538.5h2M143 539.5h1M142 540.5h1M141 541.5h1M139 542.5h2M138 543.5h1M137 544.5h1M136 545.5h1M135 546.5h1M133 547.5h2M132 548.5h1M131 549.5h1M130 550.5h1M128 551.5h2M127 552.5h1M126 553.5h1M125 554.5h1M122 555.5h3M121 556.5h1M120 557.5h1M119 558.5h1M117 559.5h2M116 560.5h1M115 561.5h1M114 562.5h1M112 563.5h2M111 564.5h1M110 565.5h1M109 566.5h1M107 567.5h2M106 568.5h1M105 569.5h1M104 570.5h1M102 571.5h2M101 572.5h1M100 573.5h1M99 574.5h1M98 575.5h1M96 576.5h2M95 577.5h1M95 578.5h1M94 579.5h1M92 580.5h2M91 581.5h1M90 582.5h1M89 583.5h1M87 584.5h2M86 585.5h1M85 586.5h1M84 587.5h1M82 588.5h2M81 589.5h1M80 590.5h1M79 591.5h1M78 592.5h1M77 593.5h1M76 594.5h1M75 595.5h1M73 596.5h2M72 597.5h1M71 598.5h1M70 599.5h1M69 600.5h1M69 601.5h1" fill="none" stroke="#00ff00" stroke-width="1"/></svg>
<div style="position:absolute;left:-551.5px;width:600px;text-align:right;top:594.24px;font-family:'Liberation Sans';font-size:12.3px;font-weight:bold;line-height:16px;color:#c0c0c0;white-space:pre;letter-spacing:0.25px">0.0001</div>
<div style="position:absolute;left:-551.5px;width:600px;text-align:right;top:503.04px;font-family:'Liberation Sans';font-size:12.3px;font-weight:bold;line-height:16px;color:#c0c0c0;white-space:pre;letter-spacing:0.25px">0.001</div>
<div style="position:absolute;left:-551.5px;width:600px;text-align:right;top:411.84px;font-family:'Liberation Sans';font-size:12.3px;font-weight:bold;line-height:16px;color:#c0c0c0;white-space:pre;letter-spacing:0.25px">0.01</div>
<div style="position:absolute;left:-551.5px;width:600px;text-align:right;top:320.64px;font-family:'Liberation Sans';font-size:12.3px;font-weight:bold;line-height:16px;color:#c0c0c0;white-space:pre;letter-spacing:0.25px">0.1</div>
<div style="position:absolute;left:-551.5px;width:600px;text-align:right;top:229.44px;font-family:'Liberation Sans';font-size:12.3px;font-weight:bold;line-height:16px;color:#c0c0c0;white-space:pre;letter-spacing:0.25px">1</div>
<div style="position:absolute;left:-551.5px;width:600px;text-align:right;top:138.24px;font-family:'Liberation Sans';font-size:12.3px;font-weight:bold;line-height:16px;color:#c0c0c0;white-space:pre;letter-spacing:0.25px">10</div>
<div style="position:absolute;left:-243.88px;width:600px;text-align:center;top:607.74px;font-family:'Liberation Sans';font-size:12.3px;font-weight:bold;line-height:16px;color:#c0c0c0;white-space:pre;letter-spacing:0.25px">10fA</div>
<div style="position:absolute;left:-118.30857142857144px;width:600px;text-align:center;top:607.74px;font-family:'Liberation Sans';font-size:12.3px;font-weight:bold;line-height:16px;color:#c0c0c0;white-space:pre;letter-spacing:0.25px">100fA</div>
<div style="position:absolute;left:7.262857142857115px;width:600px;text-align:center;top:607.74px;font-family:'Liberation Sans';font-size:12.3px;font-weight:bold;line-height:16px;color:#c0c0c0;white-space:pre;letter-spacing:0.25px">1pA</div>
<div style="position:absolute;left:132.83428571428573px;width:600px;text-align:center;top:607.74px;font-family:'Liberation Sans';font-size:12.3px;font-weight:bold;line-height:16px;color:#c0c0c0;white-space:pre;letter-spacing:0.25px">10pA</div>
<div style="position:absolute;left:258.4057142857142px;width:600px;text-align:center;top:607.74px;font-family:'Liberation Sans';font-size:12.3px;font-weight:bold;line-height:16px;color:#c0c0c0;white-space:pre;letter-spacing:0.25px">100pA</div>
<div style="position:absolute;left:383.9771428571429px;width:600px;text-align:center;top:607.74px;font-family:'Liberation Sans';font-size:12.3px;font-weight:bold;line-height:16px;color:#c0c0c0;white-space:pre;letter-spacing:0.25px">1000pA</div>
<div style="position:absolute;left:509.54857142857145px;width:600px;text-align:center;top:607.74px;font-family:'Liberation Sans';font-size:12.3px;font-weight:bold;line-height:16px;color:#c0c0c0;white-space:pre;letter-spacing:0.25px">10nA</div>
<div style="position:absolute;left:635.12px;width:600px;text-align:center;top:607.74px;font-family:'Liberation Sans';font-size:12.3px;font-weight:bold;line-height:16px;color:#c0c0c0;white-space:pre;letter-spacing:0.25px">100nA</div>
<div style="position:absolute;left:196.0px;width:600px;text-align:center;top:127.74px;font-family:'Liberation Sans';font-size:12.3px;font-weight:bold;line-height:16px;color:#00ff00;white-space:pre;">V(out)</div>
<div style="position:absolute;left:966px;top:128px;width:944px;height:497px;background:#000000;"></div>
<svg style="left:0;top:0" width="1920" height="1200" shape-rendering="crispEdges"><line x1="1050.5" y1="602" x2="1050.5" y2="145" stroke="#808080" stroke-dasharray="3 3"/><rect x="1050" y="602" width="1" height="2" fill="#c0c0c0"/><line x1="1072.5" y1="602" x2="1072.5" y2="145" stroke="#808080" stroke-dasharray="3 3"/><rect x="1072" y="602" width="1" height="2" fill="#c0c0c0"/><line x1="1088.5" y1="602" x2="1088.5" y2="145" stroke="#808080" stroke-dasharray="3 3"/><rect x="1088" y="602" width="1" height="2" fill="#c0c0c0"/><line x1="1100.5" y1="602" x2="1100.5" y2="145" stroke="#808080" stroke-dasharray="3 3"/><rect x="1100" y="602" width="1" height="2" fill="#c0c0c0"/><line x1="1110.5" y1="602" x2="1110.5" y2="145" stroke="#808080" stroke-dasharray="3 3"/><rect x="1110" y="602" width="1" height="2" fill="#c0c0c0"/><line x1="1118.5" y1="602" x2="1118.5" y2="145" stroke="#808080" stroke-dasharray="3 3"/><rect x="1118" y="602" width="1" height="2" fill="#c0c0c0"/><line x1="1125.5" y1="602" x2="1125.5" y2="145" stroke="#808080" stroke-dasharray="3 3"/><rect x="1125" y="602" width="1" height="2" fill="#c0c0c0"/><line x1="1132.5" y1="602" x2="1132.5" y2="145" stroke="#808080" stroke-dasharray="3 3"/><rect x="1132" y="602" width="1" height="2" fill="#c0c0c0"/><line x1="1138.5" y1="602" x2="1138.5" y2="145" stroke="#808080" stroke-dasharray="3 3"/><rect x="1138" y="602" width="1" height="6" fill="#c0c0c0"/><line x1="1175.5" y1="602" x2="1175.5" y2="145" stroke="#808080" stroke-dasharray="3 3"/><rect x="1175" y="602" width="1" height="2" fill="#c0c0c0"/><line x1="1197.5" y1="602" x2="1197.5" y2="145" stroke="#808080" stroke-dasharray="3 3"/><rect x="1197" y="602" width="1" height="2" fill="#c0c0c0"/><line x1="1213.5" y1="602" x2="1213.5" y2="145" stroke="#808080" stroke-dasharray="3 3"/><rect x="1213" y="602" width="1" height="2" fill="#c0c0c0"/><line x1="1225.5" y1="602" x2="1225.5" y2="145" stroke="#808080" stroke-dasharray="3 3"/><rect x="1225" y="602" width="1" height="2" fill="#c0c0c0"/><line x1="1235.5" y1="602" x2="1235.5" y2="145" stroke="#808080" stroke-dasharray="3 3"/><rect x="1235" y="602" width="1" height="2" fill="#c0c0c0"/><line x1="1244.5" y1="602" x2="1244.5" y2="145" stroke="#808080" stroke-dasharray="3 3"/><rect x="1244" y="602" width="1" height="2" fill="#c0c0c0"/><line x1="1251.5" y1="602" x2="1251.5" y2="145" stroke="#808080" stroke-dasharray="3 3"/><rect x="1251" y="602" width="1" height="2" fill="#c0c0c0"/><line x1="1257.5" y1="602" x2="1257.5" y2="145" stroke="#808080" stroke-dasharray="3 3"/><rect x="1257" y="602" width="1" height="2" fill="#c0c0c0"/><line x1="1263.5" y1="602" x2="1263.5" y2="145" stroke="#808080" stroke-dasharray="3 3"/><rect x="1263" y="602" width="1" height="6" fill="#c0c0c0"/><line x1="1301.5" y1="602" x2="1301.5" y2="145" stroke="#808080" stroke-dasharray="3 3"/><rect x="1301" y="602" width="1" height="2" fill="#c0c0c0"/><line x1="1323.5" y1="602" x2="1323.5" y2="145" stroke="#808080" stroke-dasharray="3 3"/><rect x="1323" y="602" width="1" height="2" fill="#c0c0c0"/><line x1="1339.5" y1="602" x2="1339.5" y2="145" stroke="#808080" stroke-dasharray="3 3"/><rect x="1339" y="602" width="1" height="2" fill="#c0c0c0"/><line x1="1351.5" y1="602" x2="1351.5" y2="145" stroke="#808080" stroke-dasharray="3 3"/><rect x="1351" y="602" width="1" height="2" fill="#c0c0c0"/><line x1="1361.5" y1="602" x2="1361.5" y2="145" stroke="#808080" stroke-dasharray="3 3"/><rect x="1361" y="602" width="1" height="2" fill="#c0c0c0"/><line x1="1369.5" y1="602" x2="1369.5" y2="145" stroke="#808080" stroke-dasharray="3 3"/><rect x="1369" y="602" width="1" height="2" fill="#c0c0c0"/><line x1="1377.5" y1="602" x2="1377.5" y2="145" stroke="#808080" stroke-dasharray="3 3"/><rect x="1377" y="602" width="1" height="2" fill="#c0c0c0"/><line x1="1383.5" y1="602" x2="1383.5" y2="145" stroke="#808080" stroke-dasharray="3 3"/><rect x="1383" y="602" width="1" height="2" fill="#c0c0c0"/><line x1="1389.5" y1="602" x2="1389.5" y2="145" stroke="#808080" stroke-dasharray="3 3"/><rect x="1389" y="602" width="1" height="6" fill="#c0c0c0"/><line x1="1427.5" y1="602" x2="1427.5" y2="145" stroke="#808080" stroke-dasharray="3 3"/><rect x="1427" y="602" width="1" height="2" fill="#c0c0c0"/><line x1="1449.5" y1="602" x2="1449.5" y2="145" stroke="#808080" stroke-dasharray="3 3"/><rect x="1449" y="602" width="1" height="2" fill="#c0c0c0"/><line x1="1464.5" y1="602" x2="1464.5" y2="145" stroke="#808080" stroke-dasharray="3 3"/><rect x="1464" y="602" width="1" height="2" fill="#c0c0c0"/><line x1="1476.5" y1="602" x2="1476.5" y2="145" stroke="#808080" stroke-dasharray="3 3"/><rect x="1476" y="602" width="1" height="2" fill="#c0c0c0"/><line x1="1486.5" y1="602" x2="1486.5" y2="145" stroke="#808080" stroke-dasharray="3 3"/><rect x="1486" y="602" width="1" height="2" fill="#c0c0c0"/><line x1="1495.5" y1="602" x2="1495.5" y2="145" stroke="#808080" stroke-dasharray="3 3"/><rect x="1495" y="602" width="1" height="2" fill="#c0c0c0"/><line x1="1502.5" y1="602" x2="1502.5" y2="145" stroke="#808080" stroke-dasharray="3 3"/><rect x="1502" y="602" width="1" height="2" fill="#c0c0c0"/><line x1="1509.5" y1="602" x2="1509.5" y2="145" stroke="#808080" stroke-dasharray="3 3"/><rect x="1509" y="602" width="1" height="2" fill="#c0c0c0"/><line x1="1514.5" y1="602" x2="1514.5" y2="145" stroke="#808080" stroke-dasharray="3 3"/><rect x="1514" y="602" width="1" height="6" fill="#c0c0c0"/><line x1="1552.5" y1="602" x2="1552.5" y2="145" stroke="#808080" stroke-dasharray="3 3"/><rect x="1552" y="602" width="1" height="2" fill="#c0c0c0"/><line x1="1574.5" y1="602" x2="1574.5" y2="145" stroke="#808080" stroke-dasharray="3 3"/><rect x="1574" y="602" width="1" height="2" fill="#c0c0c0"/><line x1="1590.5" y1="602" x2="1590.5" y2="145" stroke="#808080" stroke-dasharray="3 3"/><rect x="1590" y="602" width="1" height="2" fill="#c0c0c0"/><line x1="1602.5" y1="602" x2="1602.5" y2="145" stroke="#808080" stroke-dasharray="3 3"/><rect x="1602" y="602" width="1" height="2" fill="#c0c0c0"/><line x1="1612.5" y1="602" x2="1612.5" y2="145" stroke="#808080" stroke-dasharray="3 3"/><rect x="1612" y="602" width="1" height="2" fill="#c0c0c0"/><line x1="1620.5" y1="602" x2="1620.5" y2="145" stroke="#808080" stroke-dasharray="3 3"/><rect x="1620" y="602" width="1" height="2" fill="#c0c0c0"/><line x1="1628.5" y1="602" x2="1628.5" y2="145" stroke="#808080" stroke-dasharray="3 3"/><rect x="1628" y="602" width="1" height="2" fill="#c0c0c0"/><line x1="1634.5" y1="602" x2="1634.5" y2="145" stroke="#808080" stroke-dasharray="3 3"/><rect x="1634" y="602" width="1" height="2" fill="#c0c0c0"/><line x1="1640.5" y1="602" x2="1640.5" y2="145" stroke="#808080" stroke-dasharray="3 3"/><rect x="1640" y="602" width="1" height="6" fill="#c0c0c0"/><line x1="1678.5" y1="602" x2="1678.5" y2="145" stroke="#808080" stroke-dasharray="3 3"/><rect x="1678" y="602" width="1" height="2" fill="#c0c0c0"/><line x1="1700.5" y1="602" x2="1700.5" y2="145" stroke="#808080" stroke-dasharray="3 3"/><rect x="1700" y="602" width="1" height="2" fill="#c0c0c0"/><line x1="1715.5" y1="602" x2="1715.5" y2="145" stroke="#808080" stroke-dasharray="3 3"/><rect x="1715" y="602" width="1" height="2" fill="#c0c0c0"/><line x1="1728.5" y1="602" x2="1728.5" y2="145" stroke="#808080" stroke-dasharray="3 3"/><rect x="1728" y="602" width="1" height="2" fill="#c0c0c0"/><line x1="1738.5" y1="602" x2="1738.5" y2="145" stroke="#808080" stroke-dasharray="3 3"/><rect x="1738" y="602" width="1" height="2" fill="#c0c0c0"/><line x1="1746.5" y1="602" x2="1746.5" y2="145" stroke="#808080" stroke-dasharray="3 3"/><rect x="1746" y="602" width="1" height="2" fill="#c0c0c0"/><line x1="1753.5" y1="602" x2="1753.5" y2="145" stroke="#808080" stroke-dasharray="3 3"/><rect x="1753" y="602" width="1" height="2" fill="#c0c0c0"/><line x1="1760.5" y1="602" x2="1760.5" y2="145" stroke="#808080" stroke-dasharray="3 3"/><rect x="1760" y="602" width="1" height="2" fill="#c0c0c0"/><line x1="1765.5" y1="602" x2="1765.5" y2="145" stroke="#808080" stroke-dasharray="3 3"/><rect x="1765" y="602" width="1" height="6" fill="#c0c0c0"/><line x1="1803.5" y1="602" x2="1803.5" y2="145" stroke="#808080" stroke-dasharray="3 3"/><rect x="1803" y="602" width="1" height="2" fill="#c0c0c0"/><line x1="1825.5" y1="602" x2="1825.5" y2="145" stroke="#808080" stroke-dasharray="3 3"/><rect x="1825" y="602" width="1" height="2" fill="#c0c0c0"/><line x1="1841.5" y1="602" x2="1841.5" y2="145" stroke="#808080" stroke-dasharray="3 3"/><rect x="1841" y="602" width="1" height="2" fill="#c0c0c0"/><line x1="1853.5" y1="602" x2="1853.5" y2="145" stroke="#808080" stroke-dasharray="3 3"/><rect x="1853" y="602" width="1" height="2" fill="#c0c0c0"/><line x1="1863.5" y1="602" x2="1863.5" y2="145" stroke="#808080" stroke-dasharray="3 3"/><rect x="1863" y="602" width="1" height="2" fill="#c0c0c0"/><line x1="1872.5" y1="602" x2="1872.5" y2="145" stroke="#808080" stroke-dasharray="3 3"/><rect x="1872" y="602" width="1" height="2" fill="#c0c0c0"/><line x1="1879.5" y1="602" x2="1879.5" y2="145" stroke="#808080" stroke-dasharray="3 3"/><rect x="1879" y="602" width="1" height="2" fill="#c0c0c0"/><line x1="1885.5" y1="602" x2="1885.5" y2="145" stroke="#808080" stroke-dasharray="3 3"/><rect x="1885" y="602" width="1" height="2" fill="#c0c0c0"/><rect x="1891" y="602" width="1" height="6" fill="#c0c0c0"/><rect x="1012" y="602" width="1" height="6" fill="#c0c0c0"/><rect x="1006" y="601" width="6" height="1" fill="#c0c0c0"/><rect x="1010" y="574" width="2" height="1" fill="#c0c0c0"/><rect x="1010" y="557" width="2" height="1" fill="#c0c0c0"/><rect x="1010" y="546" width="2" height="1" fill="#c0c0c0"/><rect x="1010" y="537" width="2" height="1" fill="#c0c0c0"/><rect x="1010" y="530" width="2" height="1" fill="#c0c0c0"/><rect x="1010" y="524" width="2" height="1" fill="#c0c0c0"/><rect x="1010" y="519" width="2" height="1" fill="#c0c0c0"/><rect x="1010" y="514" width="2" height="1" fill="#c0c0c0"/><line x1="1012" y1="510.5" x2="1891" y2="510.5" stroke="#808080" stroke-dasharray="3 3"/><rect x="1006" y="510" width="6" height="1" fill="#c0c0c0"/><rect x="1010" y="482" width="2" height="1" fill="#c0c0c0"/><rect x="1010" y="466" width="2" height="1" fill="#c0c0c0"/><rect x="1010" y="455" width="2" height="1" fill="#c0c0c0"/><rect x="1010" y="446" width="2" height="1" fill="#c0c0c0"/><rect x="1010" y="439" width="2" height="1" fill="#c0c0c0"/><rect x="1010" y="433" width="2" height="1" fill="#c0c0c0"/><rect x="1010" y="427" width="2" height="1" fill="#c0c0c0"/><rect x="1010" y="423" width="2" height="1" fill="#c0c0c0"/><line x1="1012" y1="419.5" x2="1891" y2="419.5" stroke="#808080" stroke-dasharray="3 3"/><rect x="1006" y="419" width="6" height="1" fill="#c0c0c0"/><rect x="1010" y="391" width="2" height="1" fill="#c0c0c0"/><rect x="1010" y="375" width="2" height="1" fill="#c0c0c0"/><rect x="1010" y="364" width="2" height="1" fill="#c0c0c0"/><rect x="1010" y="355" width="2" height="1" fill="#c0c0c0"/><rect x="1010" y="348" width="2" height="1" fill="#c0c0c0"/><rect x="1010" y="342" width="2" height="1" fill="#c0c0c0"/><rect x="1010" y="336" width="2" height="1" fill="#c0c0c0"/><rect x="1010" y="332" width="2" height="1" fill="#c0c0c0"/><line x1="1012" y1="327.5" x2="1891" y2="327.5" stroke="#808080" stroke-dasharray="3 3"/><rect x="1006" y="327" width="6" height="1" fill="#c0c0c0"/><rect x="1010" y="300" width="2" height="1" fill="#c0c0c0"/><rect x="1010" y="284" width="2" height="1" fill="#c0c0c0"/><rect x="1010" y="272" width="2" height="1" fill="#c0c0c0"/><rect x="1010" y="264" width="2" height="1" fill="#c0c0c0"/><rect x="1010" y="256" width="2" height="1" fill="#c0c0c0"/><rect x="1010" y="250" width="2" height="1" fill="#c0c0c0"/><rect x="1010" y="245" width="2" height="1" fill="#c0c0c0"/><rect x="1010" y="240" width="2" height="1" fill="#c0c0c0"/><line x1="1012" y1="236.5" x2="1891" y2="236.5" stroke="#808080" stroke-dasharray="3 3"/><rect x="1006" y="236" width="6" height="1" fill="#c0c0c0"/><rect x="1010" y="209" width="2" height="1" fill="#c0c0c0"/><rect x="1010" y="193" width="2" height="1" fill="#c0c0c0"/><rect x="1010" y="181" width="2" height="1" fill="#c0c0c0"/><rect x="1010" y="172" width="2" height="1" fill="#c0c0c0"/><rect x="1010" y="165" width="2" height="1" fill="#c0c0c0"/><rect x="1010" y="159" width="2" height="1" fill="#c0c0c0"/><rect x="1010" y="154" width="2" height="1" fill="#c0c0c0"/><rect x="1010" y="149" width="2" height="1" fill="#c0c0c0"/><rect x="1006" y="145" width="6" height="1" fill="#c0c0c0"/><rect x="1012.5" y="145.5" width="879" height="456" fill="none" stroke="#c0c0c0"/><path d="M1885 145.5h2M1883 146.5h2M1882 147.5h1M1881 148.5h1M1879 149.5h2M1878 150.5h1M1877 151.5h1M1876 152.5h1M1873 153.5h3M1872 154.5h1M1871 155.5h1M1870 156.5h1M1868 157.5h2M1867 158.5h1M1866 159.5h1M1865 160.5h1M1862 161.5h3M1861 162.5h1M1860 163.5h1M1859 164.5h1M1857 165.5h2M1856 166.5h1M1855 167.5h1M1853 168.5h2M1852 169.5h1M1850 170.5h2M1849 171.5h1M1848 172.5h1M1847 173.5h1M1845 174.5h2M1844 175.5h1M1842 176.5h2M1841 177.5h1M1839 178.5h2M1838 179.5h1M1837 180.5h1M1836 181.5h1M1834 182.5h2M1832 183.5h2M1831 184.5h1M1830 185.5h1M1828 186.5h2M1827 187.5h1M1826 188.5h1M1825 189.5h1M1822 190.5h3M1821 191.5h1M1820 192.5h1M1819 193.5h1M1817 194.5h2M1816 195.5h1M1815 196.5h1M1814 197.5h1M1812 198.5h2M1810 199.5h2M1809 200.5h1M1808 201.5h1M1807 202.5h1M1805 203.5h2M1804 204.5h1M1802 205.5h2M1801 206.5h1M1799 207.5h2M1798 208.5h1M1797 209.5h1M1796 210.5h1M1794 211.5h2M1792 212.5h2M1791 213.5h1M1790 214.5h1M1788 215.5h2M1787 216.5h1M1786 217.5h1M1785 218.5h1M1782 219.5h3M1781 220.5h1M1780 221.5h1M1779 222.5h1M1777 223.5h2M1776 224.5h1M1775 225.5h1M1774 226.5h1M1773 227.5h1M1770 228.5h3M1769 229.5h1M1768 230.5h1M1767 231.5h1M1765 232.5h2M1764 233.5h1M1763 234.5h1M1761 235.5h2M1759 236.5h2M1758 237.5h1M1757 238.5h1M1756 239.5h1M1754 240.5h2M1753 241.5h1M1751 242.5h2M1750 243.5h1M1748 244.5h2M1747 245.5h1M1746 246.5h1M1745 247.5h1M1743 248.5h2M1741 249.5h2M1740 250.5h1M1739 251.5h1M1737 252.5h2M1736 253.5h1M1735 254.5h1M1734 255.5h1M1733 256.5h1M1730 257.5h3M1729 258.5h1M1728 259.5h1M1727 260.5h1M1725 261.5h2M1724 262.5h1M1723 263.5h1M1721 264.5h2M1719 265.5h2M1718 266.5h1M1717 267.5h1M1716 268.5h1M1714 269.5h2M1713 270.5h1M1712 271.5h1M1710 272.5h2M1708 273.5h2M1707 274.5h1M1706 275.5h1M1705 276.5h1M1703 277.5h2M1702 278.5h1M1700 279.5h2M1699 280.5h1M1697 281.5h2M1696 282.5h1M1695 283.5h1M1694 284.5h1M1693 285.5h1M1690 286.5h3M1689 287.5h1M1688 288.5h1M1687 289.5h1M1685 290.5h2M1684 291.5h1M1683 292.5h1M1682 293.5h1M1679 294.5h3M1678 295.5h1M1677 296.5h1M1676 297.5h1M1674 298.5h2M1673 299.5h1M1672 300.5h1M1670 301.5h2M1668 302.5h2M1667 303.5h1M1666 304.5h1M1665 305.5h1M1663 306.5h2M1662 307.5h1M1661 308.5h1M1659 309.5h2M1657 310.5h2M1656 311.5h1M1655 312.5h1M1654 313.5h1M1653 314.5h1M1651 315.5h2M1649 316.5h2M1648 317.5h1M1647 318.5h1M1645 319.5h2M1644 320.5h1M1643 321.5h1M1642 322.5h1M1639 323.5h3M1638 324.5h1M1637 325.5h1M1636 326.5h1M1634 327.5h2M1633 328.5h1M1632 329.5h1M1631 330.5h1M1628 331.5h3M1627 332.5h1M1626 333.5h1M1625 334.5h1M1623 335.5h2M1622 336.5h1M1621 337.5h1M1620 338.5h1M1617 339.5h3M1616 340.5h1M1615 341.5h1M1614 342.5h1M1613 343.5h1M1611 344.5h2M1610 345.5h1M1608 346.5h2M1607 347.5h1M1605 348.5h2M1604 349.5h1M1603 350.5h1M1602 351.5h1M1600 352.5h2M1598 353.5h2M1597 354.5h1M1596 355.5h1M1594 356.5h2M1593 357.5h1M1592 358.5h1M1591 359.5h1M1588 360.5h3M1587 361.5h1M1586 362.5h1M1585 363.5h1M1583 364.5h2M1582 365.5h1M1581 366.5h1M1580 367.5h1M1577 368.5h3M1576 369.5h1M1575 370.5h1M1574 371.5h1M1573 372.5h1M1571 373.5h2M1570 374.5h1M1569 375.5h1M1567 376.5h2M1565 377.5h2M1564 378.5h1M1563 379.5h1M1562 380.5h1M1560 381.5h2M1559 382.5h1M1558 383.5h1M1556 384.5h2M1554 385.5h2M1553 386.5h1M1552 387.5h1M1551 388.5h1M1549 389.5h2M1548 390.5h1M1546 391.5h2M1545 392.5h1M1543 393.5h2M1542 394.5h1M1541 395.5h1M1540 396.5h1M1538 397.5h2M1537 398.5h1M1535 399.5h2M1534 400.5h1M1533 401.5h1M1531 402.5h2M1530 403.5h1M1529 404.5h1M1528 405.5h1M1526 406.5h2M1524 407.5h2M1523 408.5h1M1522 409.5h1M1520 410.5h2M1519 411.5h1M1518 412.5h1M1517 413.5h1M1515 414.5h2M1513 415.5h2M1512 416.5h1M1511 417.5h1M1509 418.5h2M1508 419.5h1M1507 420.5h1M1506 421.5h1M1504 422.5h2M1502 423.5h2M1501 424.5h1M1500 425.5h1M1498 426.5h2M1497 427.5h1M1496 428.5h1M1495 429.5h1M1494 430.5h1M1491 431.5h3M1490 432.5h1M1489 433.5h1M1488 434.5h1M1486 435.5h2M1485 436.5h1M1484 437.5h1M1483 438.5h1M1481 439.5h2M1479 440.5h2M1478 441.5h1M1477 442.5h1M1475 443.5h2M1474 444.5h1M1473 445.5h1M1472 446.5h1M1470 447.5h2M1469 448.5h1M1467 449.5h2M1466 450.5h1M1464 451.5h2M1463 452.5h1M1462 453.5h1M1461 454.5h1M1459 455.5h2M1458 456.5h1M1457 457.5h1M1456 458.5h1M1454 459.5h2M1452 460.5h2M1451 461.5h1M1450 462.5h1M1449 463.5h1M1447 464.5h2M1446 465.5h1M1445 466.5h1M1444 467.5h1M1441 468.5h3M1440 469.5h1M1439 470.5h1M1438 471.5h1M1436 472.5h2M1435 473.5h1M1434 474.5h1M1433 475.5h1M1431 476.5h2M1430 477.5h1M1429 478.5h1M1428 479.5h1M1425 480.5h3M1424 481.5h1M1423 482.5h1M1422 483.5h1M1420 484.5h2M1419 485.5h1M1418 486.5h1M1417 487.5h1M1416 488.5h1M1414 489.5h2M1413 490.5h1M1412 491.5h1M1411 492.5h1M1409 493.5h2M1408 494.5h1M1406 495.5h2M1405 496.5h1M1403 497.5h2M1402 498.5h1M1401 499.5h1M1400 500.5h1M1398 501.5h2M1397 502.5h1M1396 503.5h1M1395 504.5h1M1393 505.5h2M1392 506.5h1M1391 507.5h1M1390 508.5h1M1388 509.5h2M1387 510.5h1M1386 511.5h1M1385 512.5h1M1383 513.5h2M1382 514.5h1M1381 515.5h1M1380 516.5h1M1379 517.5h1M1377 518.5h2M1376 519.5h1M1375 520.5h1M1374 521.5h1M1372 522.5h2M1371 523.5h1M1370 524.5h1M1369 525.5h1M1367 526.5h2M1366 527.5h1M1365 528.5h1M1364 529.5h1M1362 530.5h2M1361 531.5h1M1360 532.5h1M1359 533.5h1M1357 534.5h2M1356 535.5h1M1356 536.5h1M1355 537.5h1M1353 538.5h2M1352 539.5h1M1351 540.5h1M1350 541.5h1M1348 542.5h2M1347 543.5h1M1346 544.5h1M1345 545.5h1M1344 546.5h1M1343 547.5h1M1342 548.5h1M1341 549.5h1M1340 550.5h1M1338 551.5h2M1337 552.5h1M1336 553.5h1M1336 554.5h1M1334 555.5h2M1333 556.5h1M1332 557.5h1M1331 558.5h1M1330 559.5h1M1329 560.5h1M1328 561.5h1M1327 562.5h1M1325 563.5h2M1325 564.5h1M1324 565.5h1M1323 566.5h1M1321 567.5h2M1321 568.5h1M1320 569.5h1M1319 570.5h1M1317 571.5h2M1317 572.5h1M1316 573.5h1M1315 574.5h1M1314 575.5h1M1313 576.5h2M1312 577.5h1M1311 578.5h1M1311 579.5h1M1309 580.5h2M1308 581.5h1M1308 582.5h1M1307 583.5h1M1306 584.5h1M1305 585.5h1M1304 586.5h1M1304 587.5h1M1302 588.5h2M1302 589.5h1M1301 590.5h1M1300 591.5h1M1299 592.5h2M1298 593.5h1M1298 594.5h1M1297 595.5h1M1296 596.5h1M1295 597.5h1M1295 598.5h1M1294 599.5h1M1293 600.5h1M1293 601.5h1" fill="none" stroke="#ff0000" stroke-width="1"/><path d="M1764 145.5h2M1763 146.5h1M1762 147.5h1M1761 148.5h1M1759 149.5h2M1758 150.5h1M1756 151.5h2M1755 152.5h1M1753 153.5h2M1752 154.5h1M1751 155.5h1M1750 156.5h1M1748 157.5h2M1746 158.5h2M1745 159.5h1M1744 160.5h1M1742 161.5h2M1741 162.5h1M1740 163.5h1M1739 164.5h1M1736 165.5h3M1735 166.5h1M1734 167.5h1M1733 168.5h1M1732 169.5h1M1730 170.5h2M1729 171.5h1M1728 172.5h1M1727 173.5h1M1724 174.5h3M1723 175.5h1M1722 176.5h1M1721 177.5h1M1719 178.5h2M1718 179.5h1M1717 180.5h1M1715 181.5h2M1713 182.5h2M1712 183.5h1M1711 184.5h1M1710 185.5h1M1708 186.5h2M1707 187.5h1M1705 188.5h2M1704 189.5h1M1702 190.5h2M1701 191.5h1M1700 192.5h1M1699 193.5h1M1697 194.5h2M1695 195.5h2M1694 196.5h1M1693 197.5h1M1692 198.5h1M1690 199.5h2M1689 200.5h1M1688 201.5h1M1687 202.5h1M1684 203.5h3M1683 204.5h1M1682 205.5h1M1681 206.5h1M1679 207.5h2M1678 208.5h1M1677 209.5h1M1676 210.5h1M1673 211.5h3M1672 212.5h1M1671 213.5h1M1670 214.5h1M1668 215.5h2M1667 216.5h1M1666 217.5h1M1664 218.5h2M1662 219.5h2M1661 220.5h1M1660 221.5h1M1659 222.5h1M1657 223.5h2M1656 224.5h1M1654 225.5h2M1653 226.5h1M1652 227.5h1M1650 228.5h2M1649 229.5h1M1648 230.5h1M1647 231.5h1M1644 232.5h3M1643 233.5h1M1642 234.5h1M1641 235.5h1M1639 236.5h2M1638 237.5h1M1637 238.5h1M1636 239.5h1M1633 240.5h3M1632 241.5h1M1631 242.5h1M1630 243.5h1M1628 244.5h2M1627 245.5h1M1626 246.5h1M1625 247.5h1M1622 248.5h3M1621 249.5h1M1620 250.5h1M1619 251.5h1M1617 252.5h2M1616 253.5h1M1615 254.5h1M1613 255.5h2M1612 256.5h1M1610 257.5h2M1609 258.5h1M1608 259.5h1M1607 260.5h1M1605 261.5h2M1603 262.5h2M1602 263.5h1M1601 264.5h1M1599 265.5h2M1598 266.5h1M1597 267.5h1M1596 268.5h1M1594 269.5h2M1592 270.5h2M1591 271.5h1M1590 272.5h1M1588 273.5h2M1587 274.5h1M1586 275.5h1M1585 276.5h1M1582 277.5h3M1581 278.5h1M1580 279.5h1M1579 280.5h1M1577 281.5h2M1576 282.5h1M1575 283.5h1M1574 284.5h1M1572 285.5h2M1570 286.5h2M1569 287.5h1M1568 288.5h1M1567 289.5h1M1565 290.5h2M1564 291.5h1M1563 292.5h1M1561 293.5h2M1559 294.5h2M1558 295.5h1M1557 296.5h1M1556 297.5h1M1554 298.5h2M1553 299.5h1M1551 300.5h2M1550 301.5h1M1548 302.5h2M1547 303.5h1M1546 304.5h1M1545 305.5h1M1543 306.5h2M1542 307.5h1M1540 308.5h2M1539 309.5h1M1537 310.5h2M1536 311.5h1M1535 312.5h1M1534 313.5h1M1533 314.5h1M1531 315.5h2M1529 316.5h2M1528 317.5h1M1527 318.5h1M1525 319.5h2M1524 320.5h1M1523 321.5h1M1522 322.5h1M1519 323.5h3M1518 324.5h1M1517 325.5h1M1516 326.5h1M1514 327.5h2M1513 328.5h1M1512 329.5h1M1511 330.5h1M1508 331.5h3M1507 332.5h1M1506 333.5h1M1505 334.5h1M1503 335.5h2M1502 336.5h1M1501 337.5h1M1500 338.5h1M1498 339.5h2M1496 340.5h2M1495 341.5h1M1494 342.5h1M1493 343.5h1M1491 344.5h2M1490 345.5h1M1489 346.5h1M1488 347.5h1M1485 348.5h3M1484 349.5h1M1483 350.5h1M1482 351.5h1M1480 352.5h2M1479 353.5h1M1478 354.5h1M1477 355.5h1M1475 356.5h2M1473 357.5h2M1472 358.5h1M1471 359.5h1M1469 360.5h2M1468 361.5h1M1467 362.5h1M1466 363.5h1M1464 364.5h2M1463 365.5h1M1461 366.5h2M1460 367.5h1M1458 368.5h2M1457 369.5h1M1456 370.5h1M1455 371.5h1M1454 372.5h1M1452 373.5h2M1451 374.5h1M1450 375.5h1M1448 376.5h2M1446 377.5h2M1445 378.5h1M1444 379.5h1M1443 380.5h1M1441 381.5h2M1440 382.5h1M1439 383.5h1M1438 384.5h1M1436 385.5h2M1435 386.5h1M1433 387.5h2M1432 388.5h1M1430 389.5h2M1429 390.5h1M1428 391.5h1M1427 392.5h1M1425 393.5h2M1424 394.5h1M1423 395.5h1M1422 396.5h1M1420 397.5h2M1419 398.5h1M1418 399.5h1M1416 400.5h2M1415 401.5h1M1413 402.5h2M1412 403.5h1M1411 404.5h1M1410 405.5h1M1408 406.5h2M1407 407.5h1M1406 408.5h1M1405 409.5h1M1403 410.5h2M1402 411.5h1M1401 412.5h1M1400 413.5h1M1398 414.5h2M1397 415.5h1M1396 416.5h1M1395 417.5h1M1393 418.5h2M1391 419.5h2M1390 420.5h1M1389 421.5h1M1387 422.5h2M1386 423.5h1M1385 424.5h1M1384 425.5h1M1382 426.5h2M1381 427.5h1M1380 428.5h1M1379 429.5h1M1378 430.5h1M1376 431.5h2M1375 432.5h1M1374 433.5h1M1373 434.5h1M1371 435.5h2M1370 436.5h1M1369 437.5h1M1368 438.5h1M1366 439.5h2M1366 440.5h1M1365 441.5h1M1364 442.5h1M1362 443.5h2M1361 444.5h1M1360 445.5h1M1359 446.5h1M1357 447.5h2M1356 448.5h1M1355 449.5h1M1354 450.5h1M1352 451.5h2M1351 452.5h1M1350 453.5h1M1349 454.5h1M1347 455.5h2M1347 456.5h1M1346 457.5h1M1345 458.5h1M1344 459.5h1M1342 460.5h2M1341 461.5h1M1340 462.5h1M1339 463.5h1M1338 464.5h1M1337 465.5h1M1336 466.5h1M1335 467.5h1M1333 468.5h2M1332 469.5h1M1332 470.5h1M1331 471.5h1M1329 472.5h2M1328 473.5h1M1327 474.5h1M1326 475.5h1M1325 476.5h2M1324 477.5h1M1323 478.5h1M1322 479.5h1M1321 480.5h2M1320 481.5h1M1319 482.5h1M1318 483.5h1M1317 484.5h2M1316 485.5h1M1315 486.5h1M1314 487.5h1M1314 488.5h1M1312 489.5h2M1311 490.5h1M1311 491.5h1M1310 492.5h1M1309 493.5h1M1308 494.5h1M1307 495.5h1M1306 496.5h1M1305 497.5h2M1304 498.5h1M1304 499.5h1M1303 500.5h1M1302 501.5h1M1301 502.5h1M1300 503.5h1M1300 504.5h1M1298 505.5h2M1298 506.5h1M1297 507.5h1M1296 508.5h1M1295 509.5h2M1295 510.5h1M1294 511.5h1M1293 512.5h1M1292 513.5h2M1292 514.5h1M1291 515.5h1M1290 516.5h1M1290 517.5h1M1289 518.5h1M1288 519.5h1M1288 520.5h1M1287 521.5h1M1286 522.5h2M1286 523.5h1M1285 524.5h1M1285 525.5h1M1284 526.5h1M1283 527.5h1M1283 528.5h1M1282 529.5h1M1281 530.5h2M1281 531.5h1M1280 532.5h1M1280 533.5h1M1279 534.5h1M1278 535.5h1M1278 536.5h1M1278 537.5h1M1277 538.5h1M1276 539.5h1M1276 540.5h1M1275 541.5h1M1275 542.5h1M1274 543.5h1M1274 544.5h1M1274 545.5h1M1273 546.5h1M1272 547.5h2M1272 548.5h1M1272 549.5h1M1271 550.5h1M1271 551.5h1M1270 552.5h1M1270 553.5h1M1270 554.5h1M1269 555.5h1M1269 556.5h1M1268 557.5h1M1268 558.5h1M1268 559.5h1M1267 560.5h1M1267 561.5h1M1267 562.5h1M1266 563.5h1M1266 564.5h1M1266 565.5h1M1265 566.5h1M1265 567.5h1M1265 568.5h1M1264 569.5h1M1264 570.5h1M1264 571.5h1M1263 572.5h1M1263 573.5h1M1263 574.5h1M1263 575.5h1M1262 576.5h2M1262 577.5h1M1262 578.5h1M1262 579.5h1M1261 580.5h2M1261 581.5h1M1261 582.5h1M1261 583.5h1M1261 584.5h1M1260 585.5h1M1260 586.5h1M1260 587.5h1M1260 588.5h1M1260 589.5h1M1259 590.5h1M1259 591.5h1M1259 592.5h1M1259 593.5h1M1259 594.5h1M1258 595.5h1M1258 596.5h1M1258 597.5h1M1258 598.5h1M1258 599.5h1M1258 600.5h1M1258 601.5h1" fill="none" stroke="#0000ff" stroke-width="1"/><path d="M1639 145.5h26M1638 146.5h1M1637 147.5h1M1636 148.5h1M1634 149.5h2M1633 150.5h1M1631 151.5h2M1630 152.5h1M1628 153.5h2M1627 154.5h1M1626 155.5h1M1625 156.5h1M1623 157.5h2M1622 158.5h1M1620 159.5h2M1619 160.5h1M1617 161.5h2M1616 162.5h1M1615 163.5h1M1614 164.5h1M1612 165.5h2M1610 166.5h2M1609 167.5h1M1608 168.5h1M1607 169.5h1M1605 170.5h2M1604 171.5h1M1603 172.5h1M1602 173.5h1M1599 174.5h3M1598 175.5h1M1597 176.5h1M1596 177.5h1M1594 178.5h2M1593 179.5h1M1592 180.5h1M1591 181.5h1M1588 182.5h3M1587 183.5h1M1586 184.5h1M1585 185.5h1M1583 186.5h2M1582 187.5h1M1581 188.5h1M1579 189.5h2M1577 190.5h2M1576 191.5h1M1575 192.5h1M1574 193.5h1M1572 194.5h2M1571 195.5h1M1569 196.5h2M1568 197.5h1M1567 198.5h1M1565 199.5h2M1564 200.5h1M1563 201.5h1M1562 202.5h1M1560 203.5h2M1558 204.5h2M1557 205.5h1M1556 206.5h1M1554 207.5h2M1553 208.5h1M1552 209.5h1M1551 210.5h1M1548 211.5h3M1547 212.5h1M1546 213.5h1M1545 214.5h1M1543 215.5h2M1542 216.5h1M1541 217.5h1M1540 218.5h1M1537 219.5h3M1536 220.5h1M1535 221.5h1M1534 222.5h1M1532 223.5h2M1531 224.5h1M1530 225.5h1M1529 226.5h1M1528 227.5h1M1525 228.5h3M1524 229.5h1M1523 230.5h1M1522 231.5h1M1520 232.5h2M1519 233.5h1M1518 234.5h1M1517 235.5h1M1514 236.5h3M1513 237.5h1M1512 238.5h1M1511 239.5h1M1509 240.5h2M1508 241.5h1M1507 242.5h1M1506 243.5h1M1503 244.5h3M1502 245.5h1M1501 246.5h1M1500 247.5h1M1498 248.5h2M1497 249.5h1M1496 250.5h1M1495 251.5h1M1492 252.5h3M1491 253.5h1M1490 254.5h1M1489 255.5h1M1488 256.5h1M1486 257.5h2M1485 258.5h1M1484 259.5h1M1482 260.5h2M1480 261.5h2M1479 262.5h1M1478 263.5h1M1477 264.5h1M1475 265.5h2M1474 266.5h1M1473 267.5h1M1472 268.5h1M1469 269.5h3M1468 270.5h1M1467 271.5h1M1466 272.5h1M1464 273.5h2M1463 274.5h1M1462 275.5h1M1461 276.5h1M1459 277.5h2M1457 278.5h2M1456 279.5h1M1455 280.5h1M1453 281.5h2M1452 282.5h1M1451 283.5h1M1450 284.5h1M1449 285.5h1M1447 286.5h2M1446 287.5h1M1444 288.5h2M1443 289.5h1M1441 290.5h2M1440 291.5h1M1439 292.5h1M1438 293.5h1M1436 294.5h2M1435 295.5h1M1434 296.5h1M1433 297.5h1M1431 298.5h2M1429 299.5h2M1428 300.5h1M1427 301.5h1M1425 302.5h2M1424 303.5h1M1423 304.5h1M1422 305.5h1M1420 306.5h2M1419 307.5h1M1418 308.5h1M1417 309.5h1M1415 310.5h2M1414 311.5h1M1413 312.5h1M1411 313.5h2M1410 314.5h1M1408 315.5h2M1407 316.5h1M1406 317.5h1M1405 318.5h1M1403 319.5h2M1402 320.5h1M1401 321.5h1M1400 322.5h1M1398 323.5h2M1397 324.5h1M1396 325.5h1M1395 326.5h1M1393 327.5h2M1392 328.5h1M1391 329.5h1M1390 330.5h1M1388 331.5h2M1387 332.5h1M1386 333.5h1M1385 334.5h1M1383 335.5h2M1382 336.5h1M1381 337.5h1M1380 338.5h1M1378 339.5h2M1377 340.5h1M1376 341.5h1M1375 342.5h1M1374 343.5h1M1372 344.5h2M1371 345.5h1M1370 346.5h1M1369 347.5h1M1367 348.5h2M1366 349.5h1M1365 350.5h1M1364 351.5h1M1362 352.5h2M1361 353.5h1M1360 354.5h1M1359 355.5h1M1357 356.5h2M1356 357.5h1M1355 358.5h1M1354 359.5h1M1352 360.5h2M1351 361.5h1M1351 362.5h1M1350 363.5h1M1348 364.5h2M1347 365.5h1M1346 366.5h1M1345 367.5h1M1343 368.5h2M1342 369.5h1M1341 370.5h1M1341 371.5h1M1340 372.5h1M1338 373.5h2M1337 374.5h1M1336 375.5h1M1335 376.5h1M1333 377.5h2M1333 378.5h1M1332 379.5h1M1331 380.5h1M1329 381.5h2M1328 382.5h1M1328 383.5h1M1327 384.5h1M1325 385.5h2M1324 386.5h1M1323 387.5h1M1323 388.5h1M1321 389.5h2M1320 390.5h1M1319 391.5h1M1319 392.5h1M1317 393.5h2M1316 394.5h1M1315 395.5h1M1315 396.5h1M1313 397.5h2M1312 398.5h1M1312 399.5h1M1311 400.5h1M1310 401.5h1M1309 402.5h1M1308 403.5h1M1307 404.5h1M1307 405.5h1M1305 406.5h2M1305 407.5h1M1304 408.5h1M1303 409.5h1M1302 410.5h1M1301 411.5h1M1300 412.5h1M1300 413.5h1M1299 414.5h1M1298 415.5h1M1297 416.5h1M1297 417.5h1M1295 418.5h2M1295 419.5h1M1294 420.5h1M1294 421.5h1M1292 422.5h2M1292 423.5h1M1291 424.5h1M1291 425.5h1M1289 426.5h2M1289 427.5h1M1288 428.5h1M1288 429.5h1M1287 430.5h1M1286 431.5h2M1286 432.5h1M1285 433.5h1M1285 434.5h1M1284 435.5h1M1283 436.5h1M1283 437.5h1M1282 438.5h1M1281 439.5h2M1281 440.5h1M1280 441.5h1M1280 442.5h1M1279 443.5h1M1279 444.5h1M1278 445.5h1M1278 446.5h1M1277 447.5h1M1276 448.5h1M1276 449.5h1M1276 450.5h1M1275 451.5h1M1274 452.5h1M1274 453.5h1M1274 454.5h1M1273 455.5h1M1273 456.5h1M1272 457.5h1M1272 458.5h1M1271 459.5h1M1271 460.5h1M1270 461.5h1M1270 462.5h1M1270 463.5h1M1269 464.5h1M1269 465.5h1M1269 466.5h1M1268 467.5h1M1268 468.5h1M1267 469.5h1M1267 470.5h1M1267 471.5h1M1266 472.5h2M1266 473.5h1M1266 474.5h1M1265 475.5h1M1265 476.5h1M1265 477.5h1M1264 478.5h1M1264 479.5h1M1264 480.5h1M1264 481.5h1M1263 482.5h1M1263 483.5h1M1263 484.5h1M1262 485.5h1M1262 486.5h1M1262 487.5h1M1262 488.5h1M1261 489.5h2M1261 490.5h1M1261 491.5h1M1261 492.5h1M1261 493.5h1M1260 494.5h1M1260 495.5h1M1260 496.5h1M1260 497.5h1M1260 498.5h1M1259 499.5h1M1259 500.5h1M1259 501.5h1M1259 502.5h1M1259 503.5h1M1259 504.5h1M1258 505.5h1M1258 506.5h1M1258 507.5h1M1258 508.5h1M1258 509.5h1M1257 510.5h1M1257 511.5h1M1257 512.5h1M1257 513.5h1M1257 514.5h1M1257 515.5h1M1257 516.5h1M1257 517.5h1M1256 518.5h1M1256 519.5h1M1256 520.5h1M1256 521.5h1M1256 522.5h1M1256 523.5h1M1256 524.5h1M1256 525.5h1M1255 526.5h2M1255 527.5h1M1255 528.5h1M1255 529.5h1M1255 530.5h1M1255 531.5h1M1255 532.5h1M1255 533.5h1M1255 534.5h1M1255 535.5h1M1255 536.5h1M1254 537.5h1M1254 538.5h1M1254 539.5h1M1254 540.5h1M1254 541.5h1M1254 542.5h1M1254 543.5h1M1254 544.5h1M1254 545.5h1M1254 546.5h1M1254 547.5h1M1254 548.5h1M1254 549.5h1M1254 550.5h1M1253 551.5h2M1253 552.5h1M1253 553.5h1M1253 554.5h1M1253 555.5h1M1253 556.5h1M1253 557.5h1M1253 558.5h1M1253 559.5h1M1253 560.5h1M1253 561.5h1M1253 562.5h1M1253 563.5h1M1253 564.5h1M1253 565.5h1M1253 566.5h1M1253 567.5h1M1253 568.5h1M1253 569.5h1M1253 570.5h1M1253 571.5h1M1253 572.5h1M1253 573.5h1M1252 574.5h1M1252 575.5h1M1252 576.5h1M1252 577.5h1M1252 578.5h1M1252 579.5h1M1252 580.5h1M1252 581.5h1M1252 582.5h1M1252 583.5h1M1252 584.5h1M1252 585.5h1M1252 586.5h1M1252 587.5h1M1252 588.5h1M1252 589.5h1M1252 590.5h1M1252 591.5h1M1252 592.5h1M1252 593.5h1M1252 594.5h1M1252 595.5h1M1252 596.5h1M1252 597.5h1M1252 598.5h1M1252 599.5h1M1252 600.5h1M1252 601.5h1" fill="none" stroke="#00ff00" stroke-width="1"/></svg>
<div style="position:absolute;left:404.5px;width:600px;text-align:right;top:594.24px;font-family:'Liberation Sans';font-size:12.3px;font-weight:bold;line-height:16px;color:#c0c0c0;white-space:pre;letter-spacing:0.25px">0.0001</div>
<div style="position:absolute;left:404.5px;width:600px;text-align:right;top:503.04px;font-family:'Liberation Sans';font-size:12.3px;font-weight:bold;line-height:16px;color:#c0c0c0;white-space:pre;letter-spacing:0.25px">0.001</div>
<div style="position:absolute;left:404.5px;width:600px;text-align:right;top:411.84px;font-family:'Liberation Sans';font-size:12.3px;font-weight:bold;line-height:16px;color:#c0c0c0;white-space:pre;letter-spacing:0.25px">0.01</div>
<div style="position:absolute;left:404.5px;width:600px;text-align:right;top:320.64px;font-family:'Liberation Sans';font-size:12.3px;font-weight:bold;line-height:16px;color:#c0c0c0;white-space:pre;letter-spacing:0.25px">0.1</div>
<div style="position:absolute;left:404.5px;width:600px;text-align:right;top:229.44px;font-family:'Liberation Sans';font-size:12.3px;font-weight:bold;line-height:16px;color:#c0c0c0;white-space:pre;letter-spacing:0.25px">1</div>
<div style="position:absolute;left:404.5px;width:600px;text-align:right;top:138.24px;font-family:'Liberation Sans';font-size:12.3px;font-weight:bold;line-height:16px;color:#c0c0c0;white-space:pre;letter-spacing:0.25px">10</div>
<div style="position:absolute;left:712.12px;width:600px;text-align:center;top:607.74px;font-family:'Liberation Sans';font-size:12.3px;font-weight:bold;line-height:16px;color:#c0c0c0;white-space:pre;letter-spacing:0.25px">10fA</div>
<div style="position:absolute;left:837.6914285714286px;width:600px;text-align:center;top:607.74px;font-family:'Liberation Sans';font-size:12.3px;font-weight:bold;line-height:16px;color:#c0c0c0;white-space:pre;letter-spacing:0.25px">100fA</div>
<div style="position:absolute;left:963.262857142857px;width:600px;text-align:center;top:607.74px;font-family:'Liberation Sans';font-size:12.3px;font-weight:bold;line-height:16px;color:#c0c0c0;white-space:pre;letter-spacing:0.25px">1pA</div>
<div style="position:absolute;left:1088.8342857142857px;width:600px;text-align:center;top:607.74px;font-family:'Liberation Sans';font-size:12.3px;font-weight:bold;line-height:16px;color:#c0c0c0;white-space:pre;letter-spacing:0.25px">10pA</div>
<div style="position:absolute;left:1214.405714285714px;width:600px;text-align:center;top:607.74px;font-family:'Liberation Sans';font-size:12.3px;font-weight:bold;line-height:16px;color:#c0c0c0;white-space:pre;letter-spacing:0.25px">100pA</div>
<div style="position:absolute;left:1339.9771428571428px;width:600px;text-align:center;top:607.74px;font-family:'Liberation Sans';font-size:12.3px;font-weight:bold;line-height:16px;color:#c0c0c0;white-space:pre;letter-spacing:0.25px">1000pA</div>
<div style="position:absolute;left:1465.5485714285714px;width:600px;text-align:center;top:607.74px;font-family:'Liberation Sans';font-size:12.3px;font-weight:bold;line-height:16px;color:#c0c0c0;white-space:pre;letter-spacing:0.25px">10nA</div>
<div style="position:absolute;left:1591.12px;width:600px;text-align:center;top:607.74px;font-family:'Liberation Sans';font-size:12.3px;font-weight:bold;line-height:16px;color:#c0c0c0;white-space:pre;letter-spacing:0.25px">100nA</div>
<div style="position:absolute;left:1152.0px;width:600px;text-align:center;top:127.74px;font-family:'Liberation Sans';font-size:12.3px;font-weight:bold;line-height:16px;color:#00ff00;white-space:pre;">V(out)</div>
<div style="position:absolute;left:10px;top:656px;width:944px;height:497px;background:#c0c0c0;"></div>
<svg style="left:0;top:0" width="1920" height="1200" shape-rendering="crispEdges"><text transform="translate(91,794.5) rotate(-90)" x="0" y="0" font-family="Liberation Sans" font-weight="bold" font-size="25.3" fill="#000">V+</text><polyline points="82.5,794.5 82.5,802.5" fill="none" stroke="#000080" stroke-width="1"/><circle cx="82.5" cy="835.5" r="33" fill="none" stroke="#000080" stroke-width="1"/><polyline points="74.5,815.5 91.5,815.5" fill="none" stroke="#000080" stroke-width="1"/><polyline points="82.5,806.5 82.5,824.5" fill="none" stroke="#000080" stroke-width="1"/><polyline points="74.5,857.5 91.5,857.5" fill="none" stroke="#000080" stroke-width="1"/><polyline points="82.5,868.5 82.5,878.5" fill="none" stroke="#000080" stroke-width="1"/><polyline points="82.5,878.5 82.5,891.5" fill="none" stroke="#0000ff" stroke-width="1"/><text x="106" y="803.3" font-family="Liberation Sans" font-weight="bold" font-size="25.3" fill="#000" text-anchor="start" shape-rendering="auto">V1</text><text x="107" y="887.5" font-family="Liberation Sans" font-weight="bold" font-size="25.3" fill="#000" text-anchor="start" shape-rendering="auto">10</text><rect x="78" y="891" width="9" height="9" fill="#0000ff"/><polyline points="82.5,895.5 217.5,895.5 217.5,928.5" fill="none" stroke="#0000ff" stroke-width="1"/><polygon points="198.5,928.5 236.5,928.5 217.5,947.5" fill="none" stroke="#0000ff" stroke-width="1"/><polyline points="82.5,899.5 82.5,929.5" fill="none" stroke="#0000ff" stroke-width="1"/><polyline points="82.5,929.5 82.5,937.5" fill="none" stroke="#000080" stroke-width="1"/><circle cx="82.5" cy="970.5" r="33" fill="none" stroke="#000080" stroke-width="1"/><polyline points="74.5,949.5 91.5,949.5" fill="none" stroke="#000080" stroke-width="1"/><polyline points="82.5,941.5 82.5,958.5" fill="none" stroke="#000080" stroke-width="1"/><polyline points="74.5,991.5 91.5,991.5" fill="none" stroke="#000080" stroke-width="1"/><polyline points="82.5,1003.5 82.5,1012.5" fill="none" stroke="#000080" stroke-width="1"/><text x="106" y="937.2" font-family="Liberation Sans" font-weight="bold" font-size="25.3" fill="#000" text-anchor="start" shape-rendering="auto">V2</text><text x="107" y="1021.2" font-family="Liberation Sans" font-weight="bold" font-size="25.3" fill="#000" text-anchor="start" shape-rendering="auto">10</text><text transform="translate(91.5,1039) rotate(-90)" x="0" y="0" font-family="Liberation Sans" font-weight="bold" font-size="25.3" fill="#000">V-</text><polyline points="402.5,710.5 402.5,897.5" fill="none" stroke="#0000ff" stroke-width="1"/><polyline points="402.5,897.5 402.5,903.5" fill="none" stroke="#000080" stroke-width="1"/><circle cx="402.5" cy="936.5" r="33" fill="none" stroke="#000080" stroke-width="1"/><polyline points="402.5,920.5 402.5,941.5" fill="none" stroke="#000080" stroke-width="1"/><polygon points="397.5,941.5 407.5,941.5 402.5,953.5" fill="none" stroke="#000080"/><polyline points="402.5,969.5 402.5,976.5" fill="none" stroke="#000080" stroke-width="1"/><polyline points="402.5,976.5 402.5,1063.5" fill="none" stroke="#0000ff" stroke-width="1"/><rect x="398" y="1025" width="9" height="9" fill="#0000ff"/><polygon points="383.5,1063.5 421.5,1063.5 402.5,1082.5" fill="none" stroke="#0000ff" stroke-width="1"/><text x="427" y="904" font-family="Liberation Sans" font-weight="bold" font-size="25.3" fill="#000" text-anchor="start" shape-rendering="auto">I1</text><text x="427" y="987.4" font-family="Liberation Sans" font-weight="bold" font-size="25.3" fill="#000" text-anchor="start" shape-rendering="auto">0</text><polyline points="402.5,710.5 705.5,710.5" fill="none" stroke="#0000ff" stroke-width="1"/><rect x="482" y="706" width="9" height="9" fill="#0000ff"/><rect x="583" y="706" width="9" height="9" fill="#0000ff"/><rect x="650" y="706" width="9" height="9" fill="#0000ff"/><polyline points="486.5,710.5 486.5,895.5" fill="none" stroke="#0000ff" stroke-width="1"/><polyline points="486.5,895.5 486.5,903.5" fill="none" stroke="#000080" stroke-width="1"/><polyline points="486.5,903.5 503.5,911.5 469.5,928.5 503.5,945.5 469.5,962.5 486.5,970.5 486.5,978.5" fill="none" stroke="#000080" stroke-width="1"/><polyline points="486.5,978.5 486.5,1029.5" fill="none" stroke="#0000ff" stroke-width="1"/><rect x="482" y="1025" width="9" height="9" fill="#0000ff"/><text x="507" y="929" font-family="Liberation Sans" font-weight="bold" font-size="25.3" fill="#000" text-anchor="start" shape-rendering="auto">R1</text><text x="506.5" y="967" font-family="Liberation Sans" font-weight="bold" font-size="25.3" fill="#000" text-anchor="start" shape-rendering="auto">5G</text><polyline points="587.5,710.5 587.5,912.5" fill="none" stroke="#0000ff" stroke-width="1"/><polyline points="587.5,912.5 587.5,941.5" fill="none" stroke="#000080" stroke-width="1"/><polyline points="570.5,941.5 604.5,941.5" fill="none" stroke="#000080" stroke-width="1"/><polyline points="570.5,949.5 604.5,949.5" fill="none" stroke="#000080" stroke-width="1"/><polyline points="587.5,949.5 587.5,979.5" fill="none" stroke="#000080" stroke-width="1"/><polyline points="587.5,979.5 587.5,1029.5 402.5,1029.5" fill="none" stroke="#0000ff" stroke-width="1"/><text x="594.5" y="929" font-family="Liberation Sans" font-weight="bold" font-size="25.3" fill="#000" text-anchor="start" shape-rendering="auto">C1</text><text x="595" y="979" font-family="Liberation Sans" font-weight="bold" font-size="25.3" fill="#000" text-anchor="start" shape-rendering="auto">72p</text><polyline points="654.5,710.5 654.5,928.5 704.5,928.5" fill="none" stroke="#0000ff" stroke-width="1"/><polyline points="705.5,710.5 713.5,710.5 721.5,693.5 738.5,726.5 755.5,693.5 772.5,726.5 780.5,710.5 787.5,710.5" fill="none" stroke="#000080" stroke-width="1"/><polyline points="787.5,710.5 872.5,710.5 872.5,945.5 772.5,945.5" fill="none" stroke="#0000ff" stroke-width="1"/><text x="730" y="687" font-family="Liberation Sans" font-weight="bold" font-size="25.3" fill="#000" text-anchor="start" shape-rendering="auto">R2</text><text x="722" y="750" font-family="Liberation Sans" font-weight="bold" font-size="25.3" fill="#000" text-anchor="start" shape-rendering="auto">10G</text><text x="844.5" y="704.2" font-family="Liberation Sans" font-weight="bold" font-size="25.3" fill="#000" text-anchor="start" shape-rendering="auto">OUT</text><polyline points="704.5,911.5 772.5,945.5 704.5,979.5 704.5,911.5" fill="none" stroke="#000080" stroke-width="1"/><polyline points="704.5,962.5 671.5,962.5 671.5,1029.5" fill="none" stroke="#0000ff" stroke-width="1"/><polygon points="652.5,1029.5 690.5,1029.5 671.5,1048.5" fill="none" stroke="#0000ff" stroke-width="1"/><polyline points="709.5,928.5 717.5,928.5" fill="none" stroke="#000080" stroke-width="1"/><polyline points="709.5,962.5 717.5,962.5" fill="none" stroke="#000080" stroke-width="1"/><polyline points="713.5,958.5 713.5,966.5" fill="none" stroke="#000080" stroke-width="1"/><polyline points="721.5,877.5 721.5,928.5" fill="none" stroke="#000080" stroke-width="1"/><polyline points="721.5,962.5 721.5,1013.5" fill="none" stroke="#000080" stroke-width="1"/><polyline points="738.5,911.5 738.5,926.5" fill="none" stroke="#000080" stroke-width="1"/><polyline points="742.5,924.5 750.5,924.5" fill="none" stroke="#000080" stroke-width="1"/><polyline points="746.5,920.5 746.5,928.5" fill="none" stroke="#000080" stroke-width="1"/><polyline points="738.5,963.5 738.5,979.5" fill="none" stroke="#000080" stroke-width="1"/><polyline points="742.5,966.5 750.5,966.5" fill="none" stroke="#000080" stroke-width="1"/><text x="755" y="919.6" font-family="Liberation Sans" font-weight="bold" font-size="25.3" fill="#000" text-anchor="start" shape-rendering="auto">U1</text><text x="755" y="988" font-family="Liberation Sans" font-weight="bold" font-size="25.3" fill="#000" text-anchor="start" shape-rendering="auto">ADA4530</text><text transform="translate(746.5,911.5) rotate(-90)" x="0" y="0" font-family="Liberation Sans" font-weight="bold" font-size="25.3" fill="#000">V+</text><text transform="translate(746.5,1005.5) rotate(-90)" x="0" y="0" font-family="Liberation Sans" font-weight="bold" font-size="25.3" fill="#000">V-</text><text transform="translate(730.5,877.5) rotate(-90)" x="0" y="0" font-family="Liberation Sans" font-weight="bold" font-size="25.3" fill="#000">GRD1</text><text transform="translate(730.5,1083.5) rotate(-90)" x="0" y="0" font-family="Liberation Sans" font-weight="bold" font-size="25.3" fill="#000">GRD2</text><text x="48" y="1097.2" font-family="Liberation Sans" font-weight="bold" font-size="25.8" fill="#000" text-anchor="start" shape-rendering="auto">.dc dec I1 10f 100n</text><text x="48" y="1139" font-family="Liberation Sans" font-weight="bold" font-size="25.8" fill="#000" text-anchor="start" shape-rendering="auto">.include ADA4530.cir</text></svg>
<div style="position:absolute;left:966px;top:656px;width:944px;height:497px;background:#c0c0c0;"></div>
<svg style="left:0;top:0" width="1920" height="1200" shape-rendering="crispEdges"><text transform="translate(1004.8,801.5) rotate(-90)" x="0" y="0" font-family="Liberation Sans" font-weight="bold" font-size="19.3" fill="#000">V+</text><polyline points="998.5,799.5 998.5,807.5" fill="none" stroke="#000080" stroke-width="1"/><circle cx="998.5" cy="832.5" r="25" fill="none" stroke="#000080" stroke-width="1"/><polyline points="991.5,817.5 1005.5,817.5" fill="none" stroke="#000080" stroke-width="1"/><polyline points="998.5,810.5 998.5,824.5" fill="none" stroke="#000080" stroke-width="1"/><polyline points="991.5,848.5 1005.5,848.5" fill="none" stroke="#000080" stroke-width="1"/><polyline points="998.5,857.5 998.5,865.5" fill="none" stroke="#000080" stroke-width="1"/><polyline points="998.5,865.5 998.5,878.5" fill="none" stroke="#0000ff" stroke-width="1"/><text x="1017" y="808" font-family="Liberation Sans" font-weight="bold" font-size="19.3" fill="#000" text-anchor="start" shape-rendering="auto">V1</text><text x="1017.5" y="872" font-family="Liberation Sans" font-weight="bold" font-size="19.3" fill="#000" text-anchor="start" shape-rendering="auto">10</text><rect x="995" y="875" width="7" height="7" fill="#0000ff"/><polyline points="998.5,878.5 1101.5,878.5 1101.5,903.5" fill="none" stroke="#0000ff" stroke-width="1"/><polygon points="1086.5,903.5 1115.5,903.5 1101.5,918.5" fill="none" stroke="#0000ff" stroke-width="1"/><polyline points="998.5,878.5 998.5,902.5" fill="none" stroke="#0000ff" stroke-width="1"/><polyline points="998.5,902.5 998.5,910.5" fill="none" stroke="#000080" stroke-width="1"/><circle cx="998.5" cy="935.5" r="25" fill="none" stroke="#000080" stroke-width="1"/><polyline points="991.5,919.5 1005.5,919.5" fill="none" stroke="#000080" stroke-width="1"/><polyline points="998.5,912.5 998.5,926.5" fill="none" stroke="#000080" stroke-width="1"/><polyline points="991.5,951.5 1005.5,951.5" fill="none" stroke="#000080" stroke-width="1"/><polyline points="998.5,960.5 998.5,967.5" fill="none" stroke="#000080" stroke-width="1"/><text x="1017" y="909.3" font-family="Liberation Sans" font-weight="bold" font-size="19.3" fill="#000" text-anchor="start" shape-rendering="auto">V2</text><text x="1017.5" y="974" font-family="Liberation Sans" font-weight="bold" font-size="19.3" fill="#000" text-anchor="start" shape-rendering="auto">10</text><text transform="translate(1005,986.5) rotate(-90)" x="0" y="0" font-family="Liberation Sans" font-weight="bold" font-size="19.3" fill="#000">V-</text><polyline points="1242.5,711.5 1242.5,879.5" fill="none" stroke="#0000ff" stroke-width="1"/><polyline points="1242.5,879.5 1242.5,884.5" fill="none" stroke="#000080" stroke-width="1"/><circle cx="1242.5" cy="909.5" r="25" fill="none" stroke="#000080" stroke-width="1"/><polyline points="1242.5,897.5 1242.5,913.5" fill="none" stroke="#000080" stroke-width="1"/><polygon points="1238.5,913.5 1246.5,913.5 1242.5,922.5" fill="none" stroke="#000080"/><polyline points="1242.5,934.5 1242.5,940.5" fill="none" stroke="#000080" stroke-width="1"/><polyline points="1242.5,940.5 1242.5,1006.5" fill="none" stroke="#0000ff" stroke-width="1"/><rect x="1239" y="977" width="7" height="7" fill="#0000ff"/><polygon points="1227.5,1006.5 1256.5,1006.5 1242.5,1021.5" fill="none" stroke="#0000ff" stroke-width="1"/><text x="1260.5" y="885.2" font-family="Liberation Sans" font-weight="bold" font-size="19.3" fill="#000" text-anchor="start" shape-rendering="auto">I1</text><text x="1260.5" y="948.5" font-family="Liberation Sans" font-weight="bold" font-size="19.3" fill="#000" text-anchor="start" shape-rendering="auto">0</text><polyline points="1242.5,711.5 1475.5,711.5" fill="none" stroke="#0000ff" stroke-width="1"/><rect x="1303" y="708" width="7" height="7" fill="#0000ff"/><rect x="1380" y="708" width="7" height="7" fill="#0000ff"/><rect x="1431" y="708" width="7" height="7" fill="#0000ff"/><polyline points="1306.5,711.5 1306.5,878.5" fill="none" stroke="#0000ff" stroke-width="1"/><polyline points="1306.5,878.5 1306.5,884.5" fill="none" stroke="#000080" stroke-width="1"/><polyline points="1306.5,884.5 1319.5,890.5 1293.5,903.5 1319.5,916.5 1293.5,929.5 1306.5,935.5 1306.5,942.5" fill="none" stroke="#000080" stroke-width="1"/><polyline points="1306.5,942.5 1306.5,980.5" fill="none" stroke="#0000ff" stroke-width="1"/><rect x="1303" y="977" width="7" height="7" fill="#0000ff"/><text x="1321.5" y="904.2" font-family="Liberation Sans" font-weight="bold" font-size="19.3" fill="#000" text-anchor="start" shape-rendering="auto">R1</text><text x="1321.5" y="933" font-family="Liberation Sans" font-weight="bold" font-size="19.3" fill="#000" text-anchor="start" shape-rendering="auto">5G</text><polyline points="1383.5,711.5 1383.5,891.5" fill="none" stroke="#0000ff" stroke-width="1"/><polyline points="1383.5,891.5 1383.5,913.5" fill="none" stroke="#000080" stroke-width="1"/><polyline points="1370.5,913.5 1397.5,913.5" fill="none" stroke="#000080" stroke-width="1"/><polyline points="1370.5,919.5 1397.5,919.5" fill="none" stroke="#000080" stroke-width="1"/><polyline points="1383.5,919.5 1383.5,942.5" fill="none" stroke="#000080" stroke-width="1"/><polyline points="1383.5,942.5 1383.5,980.5 1242.5,980.5" fill="none" stroke="#0000ff" stroke-width="1"/><text x="1388.8" y="904.6" font-family="Liberation Sans" font-weight="bold" font-size="19.3" fill="#000" text-anchor="start" shape-rendering="auto">C1</text><text x="1388.8" y="942" font-family="Liberation Sans" font-weight="bold" font-size="19.3" fill="#000" text-anchor="start" shape-rendering="auto">72p</text><polyline points="1434.5,711.5 1434.5,903.5 1473.5,903.5" fill="none" stroke="#0000ff" stroke-width="1"/><polyline points="1475.5,711.5 1479.5,711.5 1486.5,698.5 1498.5,724.5 1511.5,698.5 1524.5,724.5 1531.5,711.5 1536.5,711.5" fill="none" stroke="#000080" stroke-width="1"/><polyline points="1536.5,711.5 1870.5,711.5 1870.5,750.5" fill="none" stroke="#0000ff" stroke-width="1"/><rect x="1675" y="708" width="7" height="7" fill="#0000ff"/><text x="1492.4" y="694" font-family="Liberation Sans" font-weight="bold" font-size="19.3" fill="#000" text-anchor="start" shape-rendering="auto">R2</text><text x="1474.6" y="741.7" font-family="Liberation Sans" font-weight="bold" font-size="19.3" fill="#000" text-anchor="start" shape-rendering="auto">10Meg</text><polyline points="1678.5,711.5 1678.5,750.5" fill="none" stroke="#0000ff" stroke-width="1"/><polyline points="1678.5,750.5 1678.5,755.5 1691.5,762.5 1665.5,775.5 1691.5,788.5 1665.5,801.5 1678.5,807.5 1678.5,813.5" fill="none" stroke="#000080" stroke-width="1"/><polyline points="1678.5,813.5 1678.5,839.5" fill="none" stroke="#0000ff" stroke-width="1"/><polygon points="1664.5,839.5 1692.5,839.5 1678.5,854.5" fill="none" stroke="#0000ff" stroke-width="1"/><text x="1661.8" y="771.6" font-family="Liberation Sans" font-weight="bold" font-size="19.3" fill="#000" text-anchor="end" shape-rendering="auto">R4</text><text x="1661.8" y="801" font-family="Liberation Sans" font-weight="bold" font-size="19.3" fill="#000" text-anchor="end" shape-rendering="auto">{RVAR}</text><polyline points="1870.5,750.5 1870.5,755.5 1883.5,762.5 1858.5,775.5 1883.5,788.5 1858.5,801.5 1870.5,807.5 1870.5,813.5" fill="none" stroke="#000080" stroke-width="1"/><polyline points="1870.5,813.5 1870.5,916.5 1525.5,916.5" fill="none" stroke="#0000ff" stroke-width="1"/><text x="1853.7" y="771.75" font-family="Liberation Sans" font-weight="bold" font-size="19.3" fill="#000" text-anchor="end" shape-rendering="auto">R3</text><text x="1853.7" y="801.25" font-family="Liberation Sans" font-weight="bold" font-size="19.3" fill="#000" text-anchor="end" shape-rendering="auto">100k</text><text x="1849" y="933.75" font-family="Liberation Sans" font-weight="bold" font-size="19.3" fill="#000" text-anchor="start" shape-rendering="auto">OUT</text><polyline points="1473.5,890.5 1525.5,916.5 1473.5,942.5 1473.5,890.5" fill="none" stroke="#000080" stroke-width="1"/><polyline points="1473.5,929.5 1447.5,929.5 1447.5,1006.5" fill="none" stroke="#0000ff" stroke-width="1"/><polygon points="1432.5,1006.5 1461.5,1006.5 1447.5,1020.5" fill="none" stroke="#0000ff" stroke-width="1"/><polyline points="1476.5,903.5 1483.5,903.5" fill="none" stroke="#000080" stroke-width="1"/><polyline points="1476.5,929.5 1483.5,929.5" fill="none" stroke="#000080" stroke-width="1"/><polyline points="1479.5,926.5 1479.5,933.5" fill="none" stroke="#000080" stroke-width="1"/><polyline points="1486.5,863.5 1486.5,903.5" fill="none" stroke="#000080" stroke-width="1"/><polyline points="1486.5,929.5 1486.5,967.5" fill="none" stroke="#000080" stroke-width="1"/><polyline points="1498.5,890.5 1498.5,902.5" fill="none" stroke="#000080" stroke-width="1"/><polyline points="1502.5,900.5 1509.5,900.5" fill="none" stroke="#000080" stroke-width="1"/><polyline points="1505.5,897.5 1505.5,904.5" fill="none" stroke="#000080" stroke-width="1"/><polyline points="1498.5,930.5 1498.5,942.5" fill="none" stroke="#000080" stroke-width="1"/><polyline points="1502.5,932.5 1509.5,932.5" fill="none" stroke="#000080" stroke-width="1"/><text x="1510.5" y="896.7" font-family="Liberation Sans" font-weight="bold" font-size="19.3" fill="#000" text-anchor="start" shape-rendering="auto">U1</text><text x="1510.5" y="948.8" font-family="Liberation Sans" font-weight="bold" font-size="19.3" fill="#000" text-anchor="start" shape-rendering="auto">ADA4530</text><text transform="translate(1505.2,891) rotate(-90)" x="0" y="0" font-family="Liberation Sans" font-weight="bold" font-size="19.3" fill="#000">V+</text><text transform="translate(1505.2,963) rotate(-90)" x="0" y="0" font-family="Liberation Sans" font-weight="bold" font-size="19.3" fill="#000">V-</text><text transform="translate(1493.8,864.5) rotate(-90)" x="0" y="0" font-family="Liberation Sans" font-weight="bold" font-size="19.3" fill="#000">GRD1</text><text transform="translate(1493.8,1022) rotate(-90)" x="0" y="0" font-family="Liberation Sans" font-weight="bold" font-size="19.3" fill="#000">GRD2</text><text x="972.5" y="1031.9" font-family="Liberation Sans" font-weight="bold" font-size="20" fill="#000" text-anchor="start" shape-rendering="auto">.dc dec I1 10f 100n</text><text x="972.5" y="1063.8" font-family="Liberation Sans" font-weight="bold" font-size="20" fill="#000" text-anchor="start" shape-rendering="auto">.include ada4530.cir</text><text x="972.5" y="1096" font-family="Liberation Sans" font-weight="bold" font-size="20" fill="#000" text-anchor="start" shape-rendering="auto">.step param RVAR list 100, 1k, 10k</text><text x="972.5" y="1127.6" font-family="Liberation Sans" font-weight="bold" font-size="20" fill="#000" text-anchor="start" shape-rendering="auto">.include ad8616.cir</text></svg>
<svg style="left:20px;top:45px" width="28" height="26"><path d="M0.5 0.5H14.5L19.5 5.5V21.5H0.5Z" fill="#fff" stroke="#000"/><path d="M14.5 0.5V5.5H19.5" fill="#d4d0c8" stroke="#000"/><path d="M1 18L8 9.5H19V10.5L11 18Z" fill="#ff0000"/><path d="M7 14L10 11V12.5H13L10.5 15.5H8.5V17Z" fill="#fff"/></svg>
<svg style="left:51px;top:47px" width="28" height="26"><path d="M0.5 3.5L3.5 0.5H6.5L9.5 3.5H15.5V7.5H6.5L0.5 14.5Z" fill="#ffff00" stroke="#000"/><path d="M0.5 15.5L6.5 8.5H21.5L14.5 15.5Z" fill="#808000" stroke="#000"/><path d="M12.5 0.5C14 -2 18 -2 19.5 0.5" fill="none" stroke="#000"/><path d="M17 0H21V3Z" fill="#000"/></svg>
<svg style="left:90px;top:45px" width="28" height="26" shape-rendering="crispEdges"><rect x="0.5" y="0.5" width="19" height="19" fill="#808000" stroke="#000"/><rect x="4" y="1" width="12" height="9" fill="#d4d0c8"/><rect x="16" y="2" width="2" height="2" fill="#fff"/><rect x="4" y="13" width="12" height="7" fill="#000"/><rect x="12" y="15" width="2" height="4" fill="#d4d0c8"/></svg>
<svg style="left:127px;top:45px" width="28" height="26"><path d="M1 3C2 1 4 1 6 2C8 0.5 13 0 16 1C20 2 23 6 24 10L22 9C20 7 17 9 12 9C9 9 7 10 5 10C3 10 1 9 1 7Z" fill="#fff" stroke="#000" stroke-width="1.2"/><rect x="9.5" y="10" width="6" height="6" fill="#0000c0"/><rect x="8" y="16" width="8" height="6" fill="#0000ff"/><rect x="8" y="16" width="3" height="6" fill="#0000a0"/></svg>
<svg style="left:164px;top:43px" width="28" height="26"><path d="M17 2H23L21.5 4.5L20 6M16.5 6.5L14 13.5M14 13.5L8.5 16.5L7.5 17.5H2.5V20" fill="none" stroke="#000" stroke-width="2.2"/><path d="M17 2.5H22L20 6H17Z" fill="#000"/><rect x="19" y="3.5" width="1.4" height="1.4" fill="#fff"/><path d="M17 7L16 12L13 14L12 12Z" fill="#000"/><path d="M9 8.5L12.3 6.3L14.5 8.5M17.5 11L20 13.3L23 11.3M14 15L17 18V20.5L15 22V24H17" fill="none" stroke="#000" stroke-width="1.8"/><path d="M5 2.5H7L9.5 4.5M2 5.5H4L6.5 7.5" fill="none" stroke="#808080" stroke-width="1.3"/></svg>
<svg style="left:196px;top:43px" width="28" height="26"><path d="M4 13.5L6 12.5L8.5 15.5V5.5H10.5V3.5H12V2.5H14.5V3.5H17V5.5H19V7.5H21V21L20 23.5H9L7 20.5L4 15.5Z" transform="translate(1,1)" fill="none" stroke="#fff" stroke-width="1.2"/><path d="M4 13.5L6 12.5L8.5 15.5V5.5H10.5V3.5H12V2.5H14.5V3.5H17V5.5H19V7.5H21V21L20 23.5H9L7 20.5L4 15.5Z" fill="#d4d0c8" stroke="#808080" stroke-width="1.5"/><path d="M12 4V14.5M15 4V14.5M18 6V14.5" stroke="#808080" stroke-width="1.3"/><path d="M13 4V14.5M16 4V14.5M19 8V14.5" stroke="#fff" stroke-width="0.8"/></svg>
<svg style="left:237px;top:45px" width="28" height="26"><circle cx="9" cy="8" r="7" fill="#d4d0c8" stroke="#000" stroke-width="2"/><path d="M4 6L6 4M12 12L14 10" stroke="#00ffff" stroke-width="1.5"/><path d="M14 13L21 20" stroke="#000" stroke-width="3.2"/><path d="M5 8H13M9 4V12" stroke="#000" stroke-width="2"/></svg>
<svg style="left:268px;top:45px" width="28" height="26"><circle cx="9" cy="8" r="7" fill="#d4d0c8" stroke="#808080" stroke-width="2"/><path d="M14 13L21 20" stroke="#808080" stroke-width="3.2"/><path d="M7 11L11 5" stroke="#fff" stroke-width="1"/></svg>
<svg style="left:299px;top:45px" width="28" height="26"><circle cx="9" cy="8" r="7" fill="#d4d0c8" stroke="#000" stroke-width="2"/><path d="M4 6L6 4M12 12L14 10" stroke="#00ffff" stroke-width="1.5"/><path d="M14 13L21 20" stroke="#000" stroke-width="3.2"/><path d="M5 8H13" stroke="#000" stroke-width="2"/></svg>
<svg style="left:329px;top:45px" width="28" height="26"><circle cx="9" cy="8" r="7" fill="#d4d0c8" stroke="#000" stroke-width="2"/><path d="M4 6L6 4M12 12L14 10" stroke="#00ffff" stroke-width="1.5"/><path d="M14 13L21 20" stroke="#000" stroke-width="3.2"/><path d="M1 1L15 16M16 2L3 16M10 14L14 21" stroke="#ff0000" stroke-width="2"/></svg>
<svg style="left:368px;top:45px" width="28" height="26"><path d="M3 0V21H24" fill="none" stroke="#000" stroke-width="1.5"/><path d="M0 3H3M0 7H3M0 11H3M0 15H3M0 19H3M7 21V24M12 21V24M17 21V24M22 21V24" stroke="#000"/><path d="M3 6L8 1L13 6L18 1L24 6" fill="none" stroke="#000080" stroke-width="1"/><path d="M3 10L6 7H9L12 9H16L19 11L22 9H24" fill="none" stroke="#ff0000" stroke-width="1.5"/><path d="M3 13H9V15H12V13H19V15H24" fill="none" stroke="#000080" stroke-width="1.5"/></svg>
<svg style="left:400px;top:45px" width="28" height="26"><path d="M3 0V21H24" fill="none" stroke="#909090" stroke-width="1.5"/><path d="M0 3H3M0 7H3M0 11H3M0 15H3M0 19H3M7 21V24M12 21V24M17 21V24M22 21V24" stroke="#909090"/><path d="M20 0V19M17 3L20 0L23 3M17 16L20 19L23 16M20 0L10 4L7 10L10 15L20 19" fill="none" stroke="#909090" stroke-width="1"/></svg>
<svg style="left:438px;top:45px" width="28" height="26"><rect x="0.5" y="0.5" width="23" height="21" fill="#d4d0c8" stroke="#000080" stroke-width="1.5"/><rect x="1" y="1" width="23" height="3" fill="#000080"/><rect x="1" y="11" width="23" height="3" fill="#000080"/><path d="M1 11H24" stroke="#000080" stroke-width="1.5"/><rect x="2" y="1.5" width="2" height="2" fill="#fff"/><rect x="18" y="1.5" width="2" height="2" fill="#fff"/><rect x="21" y="1.5" width="2" height="2" fill="#fff"/><rect x="2" y="11.5" width="2" height="2" fill="#fff"/><rect x="18" y="11.5" width="2" height="2" fill="#fff"/><rect x="21" y="11.5" width="2" height="2" fill="#fff"/></svg>
<svg style="left:469px;top:45px" width="28" height="26"><rect x="0.75" y="0.75" width="14" height="9" fill="#d4d0c8" stroke="#000080" stroke-width="1.5"/><rect x="0.75" y="0.75" width="14" height="3" fill="#000080"/><rect x="2" y="1.5" width="2" height="2" fill="#fff"/><rect x="5.75" y="6.75" width="14" height="9" fill="#d4d0c8" stroke="#000080" stroke-width="1.5"/><rect x="5.75" y="6.75" width="14" height="3" fill="#000080"/><rect x="7" y="7.5" width="2" height="2" fill="#fff"/><rect x="9.75" y="12.75" width="14" height="9" fill="#d4d0c8" stroke="#000080" stroke-width="1.5"/><rect x="9.75" y="12.75" width="14" height="3" fill="#000080"/><rect x="11" y="13.5" width="2" height="2" fill="#fff"/></svg>
<svg style="left:500px;top:45px" width="28" height="26"><rect x="0.75" y="0.75" width="14" height="9" fill="#d4d0c8" stroke="#000080" stroke-width="1.5"/><rect x="0.75" y="0.75" width="14" height="3" fill="#000080"/><rect x="2" y="1.5" width="2" height="2" fill="#fff"/><rect x="5.75" y="6.75" width="14" height="9" fill="#d4d0c8" stroke="#000080" stroke-width="1.5"/><rect x="5.75" y="6.75" width="14" height="3" fill="#000080"/><rect x="7" y="7.5" width="2" height="2" fill="#fff"/><rect x="9.75" y="12.75" width="14" height="9" fill="#d4d0c8" stroke="#000080" stroke-width="1.5"/><rect x="9.75" y="12.75" width="14" height="3" fill="#000080"/><rect x="11" y="13.5" width="2" height="2" fill="#fff"/><path d="M17 1H21M17 1V5M17 1L23 7" stroke="#000" stroke-width="1.5" fill="none"/></svg>
<svg style="left:545px;top:45px" width="28" height="26"><path d="M3 0L7 10L11 0" fill="none" stroke="#000" stroke-width="1.5"/><path d="M7 10L4 14M7 10L10 14" stroke="#000080" stroke-width="1.5"/><rect x="1" y="13.5" width="4" height="5" rx="1.5" fill="none" stroke="#000080" stroke-width="1.5"/><rect x="9" y="13.5" width="4" height="5" rx="1.5" fill="none" stroke="#000080" stroke-width="1.5"/></svg>
<svg style="left:571px;top:45px" width="28" height="26" shape-rendering="crispEdges"><path d="M0.5 0.5H8.5L11.5 3.5V14.5H0.5Z" fill="#fff" stroke="#000"/><path d="M3 5H8M3 8H8M3 11H8" stroke="#000"/><path d="M9.5 5.5H17.5L21.5 9.5V18.5H9.5Z" fill="#fff" stroke="#000080" stroke-width="1.5"/><path d="M12 11H18M12 13.5H18M12 16H18" stroke="#000"/></svg>
<svg style="left:603px;top:45px" width="28" height="26"><rect x="0.5" y="2.5" width="19" height="17" rx="2" fill="#888"/><rect x="7" y="0" width="6" height="3" fill="#888"/><path d="M5 5H14" stroke="#d4d0c8"/><path d="M11.5 11.5H18.5L21.5 14.5V22.5H11.5Z" fill="#d4d0c8" stroke="#fff"/><path d="M13 15H18M13 17.5H19" stroke="#888"/></svg>
<svg style="left:633px;top:46px" width="28" height="26" shape-rendering="crispEdges"><path d="M3 2H8V6H9V9H14V6H15V2H20V6H21V13L23 15V20H14V13H9V20H0V15L2 13V6H3Z" fill="#000"/><rect x="5" y="3" width="2" height="2" fill="#fff"/><rect x="16" y="3" width="2" height="2" fill="#fff"/><rect x="4" y="10" width="1" height="3" fill="#fff"/><rect x="17" y="10" width="1" height="3" fill="#fff"/><rect x="2" y="16" width="2" height="2" fill="#fff"/><rect x="18" y="16" width="2" height="2" fill="#fff"/></svg>
<svg style="left:0;top:0;width:0;height:0"><defs><pattern id="dith" width="2" height="2" patternUnits="userSpaceOnUse"><rect width="2" height="2" fill="#fff"/><rect width="1" height="1" fill="#808080"/></pattern></defs></svg>
<svg style="left:670px;top:43px" width="28" height="26"><path d="M9.5 3.5H18.5L22.5 7.5V10.5H9.5Z" fill="url(#dith)" stroke="#000" stroke-width="1.2"/><path d="M7.5 10.5H24.5V21.5H3.5V14.5Z" fill="url(#dith)" stroke="#000" stroke-width="1.2"/><path d="M3.5 14.5H7.5V10.5" fill="none" stroke="#000" stroke-width="1"/><rect x="9.5" y="21.5" width="13" height="2" fill="#fff" stroke="#000" stroke-width="1.2"/></svg>
<svg style="left:700px;top:43px" width="28" height="26"><path d="M10.5 2.5H24.5L20.5 11.5H6.5Z" fill="#fff" stroke="#000" stroke-width="1.3"/><path d="M12 5.5H19.5M11 7.5H18.5M10 9.5H17.5" stroke="#000" stroke-width="1"/><path d="M2.5 11.5L5.5 8.5H7.5M20.5 8.5H25.5V17.5L20.5 23.5H2.5V11.5H20.5L25.5 8.5M2.5 14.5H20.5M2.5 19.5H20.5M20.5 11.5V23.5M20.5 19.5L25.5 14.5" fill="none" stroke="#000" stroke-width="1.2"/><rect x="12" y="16" width="5" height="2" fill="#ffff00"/></svg>
<svg style="left:744px;top:45px" width="28" height="26"><path d="M1 17L3 12L12 2L15 5L6 15Z" fill="#ffff00" stroke="#000" stroke-width="1.2"/><circle cx="13.5" cy="3" r="2.5" fill="#ff0000"/><path d="M1 17L2.5 13.5L4.5 15.5Z" fill="#000"/><path d="M0 19.5H22" stroke="#0000ff" stroke-width="1"/></svg>
<svg style="left:772px;top:45px" width="28" height="26"><path d="M11.5 0V10M1 10H22L11.5 21Z" fill="none" stroke="#000" stroke-width="1.5"/></svg>
<svg style="left:803px;top:45px" width="28" height="26"><rect x="1" y="1" width="20" height="13" rx="2" fill="none" stroke="#000" stroke-width="1.6"/><rect x="2" y="2" width="18" height="11" fill="none" stroke="#b0a000" stroke-width="0.8"/><path d="M11 14V22" stroke="#000" stroke-width="1.5"/><text x="11" y="12" font-family="Liberation Mono" font-size="11" font-weight="bold" text-anchor="middle" fill="#000">A</text></svg>
<svg style="left:838px;top:45px" width="28" height="26"><path d="M7.5 0V2L15 6L1 13L7.5 17V22" fill="none" stroke="#000" stroke-width="1.5"/></svg>
<svg style="left:867px;top:45px" width="28" height="26"><path d="M9 0V9M9 13V22M1 9H17M1 13H17" fill="none" stroke="#000" stroke-width="1.8"/></svg>
<svg style="left:903px;top:45px" width="28" height="26"><path d="M0 1C4 0 6 3 3 6C7 7 7 10 3 11C7 12 7 16 3 17C6 19 4 21 0 21" fill="none" stroke="#000" stroke-width="1.6"/></svg>
<svg style="left:928px;top:45px" width="28" height="26"><path d="M11.5 0V22M0 5H23L11.5 17ZM0 17H23" fill="none" stroke="#000" stroke-width="1.6"/></svg>
<svg style="left:958px;top:45px" width="28" height="26"><path d="M6 4H12C20 4 20 17 12 17H6Z M1 7H6M1 14H6M18 10.5H24" fill="none" stroke="#000" stroke-width="1.6"/></svg>
<svg style="left:989px;top:45px" width="28" height="26"><path d="M5 21L1 13L3 11L6 14L5 4L7 2L9 3V1L12 0L14 2L16 1L18 3L19 5L21 6L22 9L21 14L17 21Z" fill="#fff" stroke="#000" stroke-width="1.5"/><path d="M9 3V10M13 2V10M17 4V11" stroke="#000"/></svg>
<svg style="left:1022px;top:47px" width="28" height="26"><path d="M4 17L1 11L3 8L5 9L5 3L8 2L10 3L12 1L15 3L17 5L19 9L17 14L15 17Z" fill="#fff" stroke="#000" stroke-width="1.5"/></svg>
<svg style="left:1053px;top:45px" width="28" height="26"><path d="M4 10C5 3 14 2 18 7C21 11 18 18 11 18" fill="none" stroke="#000" stroke-width="1.3"/><path d="M16 5C19 8 19 13 16 16" fill="none" stroke="#a09000" stroke-width="1"/><path d="M1 7L4 12L8 9" fill="none" stroke="#000" stroke-width="1.5"/></svg>
<svg style="left:1084px;top:45px" width="28" height="26"><path d="M18 10C17 3 8 2 4 7C1 11 4 18 11 18" fill="none" stroke="#909090" stroke-width="1.8"/><path d="M21 7L18 12L14 9" fill="none" stroke="#909090" stroke-width="1.8"/></svg>
<svg style="left:1113px;top:45px" width="28" height="26"><path d="M2 6L6 1H18L21 4" fill="none" stroke="#909090" stroke-width="1.2"/><path d="M1.5 9V20.5H6M1.5 14.5H5M1.5 9H6" fill="none" stroke="#909090" stroke-width="3"/><path d="M9 12V16M9 10.5H23M23 10.5V16M16 10.5V16" fill="none" stroke="#909090" stroke-width="3"/></svg>
<svg style="left:1144px;top:45px" width="28" height="26"><path d="M2 6L6 1H18L21 4" fill="none" stroke="#909090" stroke-width="1.2"/><path d="M1.5 9V20.5H6M1.5 14.5H5M1.5 9H6" fill="none" stroke="#909090" stroke-width="3"/><path d="M23.5 9V20.5H19M23.5 14.5H20M23.5 9H19" fill="none" stroke="#909090" stroke-width="3"/></svg>
<svg style="left:1175px;top:45px" width="28" height="26"><text x="0" y="20" font-family="Liberation Serif" font-style="italic" font-weight="bold" font-size="22" fill="#000">A</text><text x="12" y="20" font-family="Liberation Serif" font-style="italic" font-size="15" fill="#000">a</text></svg>
<svg style="left:1206px;top:45px" width="28" height="26"><text x="0" y="15" font-family="Liberation Sans" font-size="17" fill="#000">.op</text></svg>
<svg style="left:8px;top:77px" width="16" height="16" shape-rendering="crispEdges"><rect x="4" y="7" width="3" height="1" fill="#0000ff"/><rect x="7" y="3" width="2" height="9" fill="#0000ff"/><rect x="9" y="4" width="1" height="1" fill="#0000ff"/><rect x="10" y="3" width="1" height="1" fill="#0000ff"/><rect x="11" y="2" width="1" height="1" fill="#0000ff"/><rect x="12" y="1" width="1" height="1" fill="#0000ff"/><rect x="13" y="0" width="1" height="1" fill="#0000ff"/><rect x="9" y="10" width="1" height="1" fill="#0000ff"/><rect x="10" y="11" width="1" height="1" fill="#0000ff"/><rect x="12" y="11" width="1" height="3" fill="#0000ff"/><rect x="11" y="12" width="2" height="2" fill="#0000ff"/><rect x="10" y="13" width="3" height="1" fill="#0000ff"/><rect x="13" y="13" width="1" height="2" fill="#0000ff"/><rect x="14" y="15" width="1" height="1" fill="#0000ff"/></svg>
<svg style="left:271px;top:77px" width="16" height="16" shape-rendering="crispEdges"><rect x="3" y="0" width="1" height="13" fill="#d8d8d8"/><rect x="4" y="0" width="12" height="13" fill="#c0c0c0"/><rect x="2" y="0" width="1" height="16" fill="#000"/><rect x="0" y="13" width="16" height="1" fill="#000"/><rect x="0" y="1" width="2" height="1" fill="#000"/><rect x="0" y="4" width="2" height="1" fill="#000"/><rect x="0" y="7" width="2" height="1" fill="#000"/><rect x="0" y="10" width="2" height="1" fill="#000"/><rect x="2" y="14" width="1" height="2" fill="#000"/><rect x="5" y="14" width="1" height="2" fill="#000"/><rect x="8" y="14" width="1" height="2" fill="#000"/><rect x="11" y="14" width="1" height="2" fill="#000"/><rect x="14" y="14" width="1" height="2" fill="#000"/></svg><svg style="left:271px;top:77px" width="16" height="16"><polyline points="3,8.8 6,5.3 8.5,5.3 10.8,8 12.5,8 15.5,4.8" fill="none" stroke="#ff0000" stroke-width="2"/></svg>
<svg style="left:531px;top:76px" width="16" height="16" shape-rendering="crispEdges"><rect x="4" y="7" width="3" height="1" fill="#0000ff"/><rect x="7" y="3" width="2" height="9" fill="#0000ff"/><rect x="9" y="4" width="1" height="1" fill="#0000ff"/><rect x="10" y="3" width="1" height="1" fill="#0000ff"/><rect x="11" y="2" width="1" height="1" fill="#0000ff"/><rect x="12" y="1" width="1" height="1" fill="#0000ff"/><rect x="13" y="0" width="1" height="1" fill="#0000ff"/><rect x="9" y="10" width="1" height="1" fill="#0000ff"/><rect x="10" y="11" width="1" height="1" fill="#0000ff"/><rect x="12" y="11" width="1" height="3" fill="#0000ff"/><rect x="11" y="12" width="2" height="2" fill="#0000ff"/><rect x="10" y="13" width="3" height="1" fill="#0000ff"/><rect x="13" y="13" width="1" height="2" fill="#0000ff"/><rect x="14" y="15" width="1" height="1" fill="#0000ff"/></svg>
<svg style="left:825px;top:77px" width="16" height="16" shape-rendering="crispEdges"><rect x="3" y="0" width="1" height="13" fill="#d8d8d8"/><rect x="4" y="0" width="12" height="13" fill="#c0c0c0"/><rect x="2" y="0" width="1" height="16" fill="#000"/><rect x="0" y="13" width="16" height="1" fill="#000"/><rect x="0" y="1" width="2" height="1" fill="#000"/><rect x="0" y="4" width="2" height="1" fill="#000"/><rect x="0" y="7" width="2" height="1" fill="#000"/><rect x="0" y="10" width="2" height="1" fill="#000"/><rect x="2" y="14" width="1" height="2" fill="#000"/><rect x="5" y="14" width="1" height="2" fill="#000"/><rect x="8" y="14" width="1" height="2" fill="#000"/><rect x="11" y="14" width="1" height="2" fill="#000"/><rect x="14" y="14" width="1" height="2" fill="#000"/></svg><svg style="left:825px;top:77px" width="16" height="16"><polyline points="3,8.8 6,5.3 8.5,5.3 10.8,8 12.5,8 15.5,4.8" fill="none" stroke="#ff0000" stroke-width="2"/></svg>
</body></html>
